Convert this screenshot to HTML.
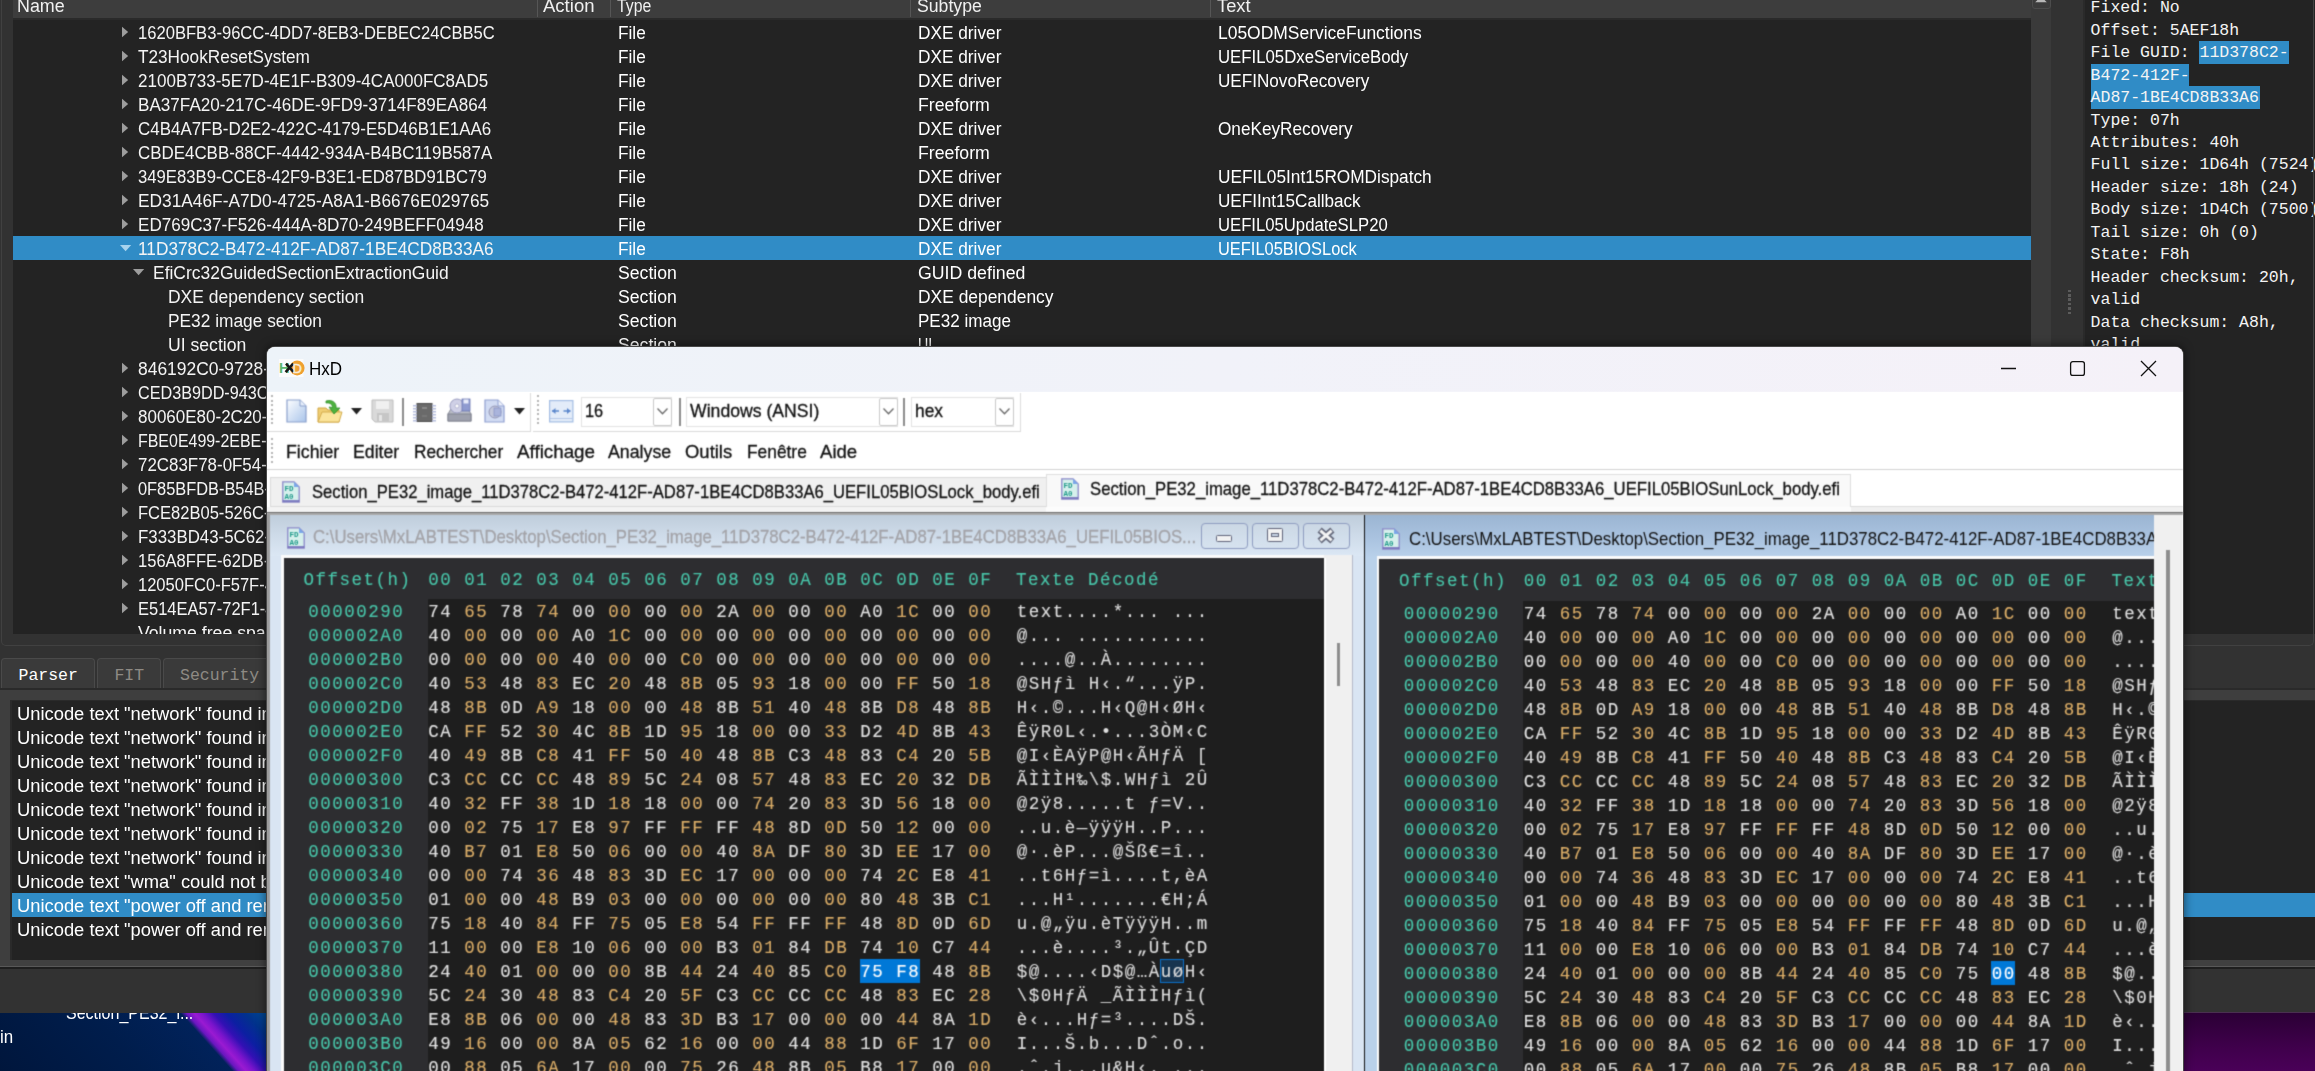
<!DOCTYPE html>
<html><head><meta charset="utf-8"><title>HxD</title><style>
html,body{margin:0;padding:0;background:#232323;}
body{width:2315px;height:1071px;overflow:hidden;position:relative;}
.t{position:absolute;white-space:pre;line-height:normal;margin:0;padding:0;transform-origin:0 0;}
.r{position:absolute;}
.c{position:absolute;overflow:hidden;}
svg{position:absolute;overflow:visible;}
</style></head><body>
<div class="r" style="left:0px;top:0px;width:2315px;height:1071px;background:#323232;"></div>
<div class="r" style="left:13px;top:0px;width:2018px;height:634px;background:#232323;"></div>
<div class="r" style="left:13px;top:0px;width:2018px;height:18px;background:#3d3d3d;"></div>
<div class="r" style="left:13px;top:18px;width:2018px;height:2px;background:#2a2a2a;"></div>
<div class="r" style="left:537px;top:0px;width:1px;height:17px;background:#565656;"></div>
<div class="r" style="left:610px;top:0px;width:1px;height:17px;background:#565656;"></div>
<div class="r" style="left:910px;top:0px;width:1px;height:17px;background:#565656;"></div>
<div class="r" style="left:1210px;top:0px;width:1px;height:17px;background:#565656;"></div>
<span class="t" style="left:16.50px;top:-4.09px;font:18px 'Liberation Sans',sans-serif;color:#f0f0f0;transform:scaleX(0.9934);"><span id="t1">Name</span></span>
<span class="t" style="left:543.00px;top:-4.09px;font:18px 'Liberation Sans',sans-serif;color:#f0f0f0;transform:scaleX(1.0294);"><span id="t2">Action</span></span>
<span class="t" style="left:617.30px;top:-4.09px;font:18px 'Liberation Sans',sans-serif;color:#f0f0f0;transform:scaleX(0.8788);"><span id="t3">Type</span></span>
<span class="t" style="left:917.00px;top:-4.09px;font:18px 'Liberation Sans',sans-serif;color:#f0f0f0;transform:scaleX(0.9809);"><span id="t4">Subtype</span></span>
<span class="t" style="left:1217.40px;top:-4.09px;font:18px 'Liberation Sans',sans-serif;color:#f0f0f0;transform:scaleX(1.0177);"><span id="t5">Text</span></span>
<div class="c" style="left:13px;top:20px;width:2018px;height:614px;">
<svg style="left:0;top:0" width="1" height="1"><path d="M109 6.7 L115.2 12 L109 17.3 Z" fill="#9d9d9d"/></svg>
<span class="t" style="left:125.00px;top:2.71px;font:18px 'Liberation Sans',sans-serif;color:#f4f4f4;transform:scaleX(0.9216);"><span id="t6">1620BFB3-96CC-4DD7-8EB3-DEBEC24CBB5C</span></span>
<span class="t" style="left:604.80px;top:2.71px;font:18px 'Liberation Sans',sans-serif;color:#fff;transform:scaleX(0.9581);"><span id="t7">File</span></span>
<span class="t" style="left:905.00px;top:2.71px;font:18px 'Liberation Sans',sans-serif;color:#fff;transform:scaleX(0.9583);"><span id="t8">DXE&nbsp;driver</span></span>
<span class="t" style="left:1204.50px;top:2.71px;font:18px 'Liberation Sans',sans-serif;color:#fff;transform:scaleX(0.9696);"><span id="t9">L05ODMServiceFunctions</span></span>
<svg style="left:0;top:0" width="1" height="1"><path d="M109 30.7 L115.2 36 L109 41.3 Z" fill="#9d9d9d"/></svg>
<span class="t" style="left:125.00px;top:26.71px;font:18px 'Liberation Sans',sans-serif;color:#f4f4f4;transform:scaleX(0.9546);"><span id="t10">T23HookResetSystem</span></span>
<span class="t" style="left:604.80px;top:26.71px;font:18px 'Liberation Sans',sans-serif;color:#fff;transform:scaleX(0.9581);"><span id="t11">File</span></span>
<span class="t" style="left:905.00px;top:26.71px;font:18px 'Liberation Sans',sans-serif;color:#fff;transform:scaleX(0.9583);"><span id="t12">DXE&nbsp;driver</span></span>
<span class="t" style="left:1204.50px;top:26.71px;font:18px 'Liberation Sans',sans-serif;color:#fff;transform:scaleX(0.9319);"><span id="t13">UEFIL05DxeServiceBody</span></span>
<svg style="left:0;top:0" width="1" height="1"><path d="M109 54.7 L115.2 60 L109 65.3 Z" fill="#9d9d9d"/></svg>
<span class="t" style="left:125.00px;top:50.71px;font:18px 'Liberation Sans',sans-serif;color:#f4f4f4;transform:scaleX(0.9459);"><span id="t14">2100B733-5E7D-4E1F-B309-4CA000FC8AD5</span></span>
<span class="t" style="left:604.80px;top:50.71px;font:18px 'Liberation Sans',sans-serif;color:#fff;transform:scaleX(0.9581);"><span id="t15">File</span></span>
<span class="t" style="left:905.00px;top:50.71px;font:18px 'Liberation Sans',sans-serif;color:#fff;transform:scaleX(0.9583);"><span id="t16">DXE&nbsp;driver</span></span>
<span class="t" style="left:1204.50px;top:50.71px;font:18px 'Liberation Sans',sans-serif;color:#fff;transform:scaleX(0.9507);"><span id="t17">UEFINovoRecovery</span></span>
<svg style="left:0;top:0" width="1" height="1"><path d="M109 78.7 L115.2 84 L109 89.3 Z" fill="#9d9d9d"/></svg>
<span class="t" style="left:125.00px;top:74.71px;font:18px 'Liberation Sans',sans-serif;color:#f4f4f4;transform:scaleX(0.9509);"><span id="t18">BA37FA20-217C-46DE-9FD9-3714F89EA864</span></span>
<span class="t" style="left:604.80px;top:74.71px;font:18px 'Liberation Sans',sans-serif;color:#fff;transform:scaleX(0.9581);"><span id="t19">File</span></span>
<span class="t" style="left:905.00px;top:74.71px;font:18px 'Liberation Sans',sans-serif;color:#fff;transform:scaleX(0.9834);"><span id="t20">Freeform</span></span>
<svg style="left:0;top:0" width="1" height="1"><path d="M109 102.7 L115.2 108 L109 113.3 Z" fill="#9d9d9d"/></svg>
<span class="t" style="left:125.00px;top:98.71px;font:18px 'Liberation Sans',sans-serif;color:#f4f4f4;transform:scaleX(0.9413);"><span id="t21">C4B4A7FB-D2E2-422C-4179-E5D46B1E1AA6</span></span>
<span class="t" style="left:604.80px;top:98.71px;font:18px 'Liberation Sans',sans-serif;color:#fff;transform:scaleX(0.9581);"><span id="t22">File</span></span>
<span class="t" style="left:905.00px;top:98.71px;font:18px 'Liberation Sans',sans-serif;color:#fff;transform:scaleX(0.9583);"><span id="t23">DXE&nbsp;driver</span></span>
<span class="t" style="left:1204.50px;top:98.71px;font:18px 'Liberation Sans',sans-serif;color:#fff;transform:scaleX(0.9548);"><span id="t24">OneKeyRecovery</span></span>
<svg style="left:0;top:0" width="1" height="1"><path d="M109 126.7 L115.2 132 L109 137.3 Z" fill="#9d9d9d"/></svg>
<span class="t" style="left:125.00px;top:122.71px;font:18px 'Liberation Sans',sans-serif;color:#f4f4f4;transform:scaleX(0.9398);"><span id="t25">CBDE4CBB-88CF-4442-934A-B4BC119B587A</span></span>
<span class="t" style="left:604.80px;top:122.71px;font:18px 'Liberation Sans',sans-serif;color:#fff;transform:scaleX(0.9581);"><span id="t26">File</span></span>
<span class="t" style="left:905.00px;top:122.71px;font:18px 'Liberation Sans',sans-serif;color:#fff;transform:scaleX(0.9834);"><span id="t27">Freeform</span></span>
<svg style="left:0;top:0" width="1" height="1"><path d="M109 150.7 L115.2 156 L109 161.3 Z" fill="#9d9d9d"/></svg>
<span class="t" style="left:125.00px;top:146.71px;font:18px 'Liberation Sans',sans-serif;color:#f4f4f4;transform:scaleX(0.9269);"><span id="t28">349E83B9-CCE8-42F9-B3E1-ED87BD91BC79</span></span>
<span class="t" style="left:604.80px;top:146.71px;font:18px 'Liberation Sans',sans-serif;color:#fff;transform:scaleX(0.9581);"><span id="t29">File</span></span>
<span class="t" style="left:905.00px;top:146.71px;font:18px 'Liberation Sans',sans-serif;color:#fff;transform:scaleX(0.9583);"><span id="t30">DXE&nbsp;driver</span></span>
<span class="t" style="left:1204.50px;top:146.71px;font:18px 'Liberation Sans',sans-serif;color:#fff;transform:scaleX(0.9579);"><span id="t31">UEFIL05Int15ROMDispatch</span></span>
<svg style="left:0;top:0" width="1" height="1"><path d="M109 174.7 L115.2 180 L109 185.3 Z" fill="#9d9d9d"/></svg>
<span class="t" style="left:125.00px;top:170.71px;font:18px 'Liberation Sans',sans-serif;color:#f4f4f4;transform:scaleX(0.9615);"><span id="t32">ED31A46F-A7D0-4725-A8A1-B6676E029765</span></span>
<span class="t" style="left:604.80px;top:170.71px;font:18px 'Liberation Sans',sans-serif;color:#fff;transform:scaleX(0.9581);"><span id="t33">File</span></span>
<span class="t" style="left:905.00px;top:170.71px;font:18px 'Liberation Sans',sans-serif;color:#fff;transform:scaleX(0.9583);"><span id="t34">DXE&nbsp;driver</span></span>
<span class="t" style="left:1204.50px;top:170.71px;font:18px 'Liberation Sans',sans-serif;color:#fff;transform:scaleX(0.9508);"><span id="t35">UEFIInt15Callback</span></span>
<svg style="left:0;top:0" width="1" height="1"><path d="M109 198.7 L115.2 204 L109 209.3 Z" fill="#9d9d9d"/></svg>
<span class="t" style="left:125.00px;top:194.71px;font:18px 'Liberation Sans',sans-serif;color:#f4f4f4;transform:scaleX(0.9492);"><span id="t36">ED769C37-F526-444A-8D70-249BEFF04948</span></span>
<span class="t" style="left:604.80px;top:194.71px;font:18px 'Liberation Sans',sans-serif;color:#fff;transform:scaleX(0.9581);"><span id="t37">File</span></span>
<span class="t" style="left:905.00px;top:194.71px;font:18px 'Liberation Sans',sans-serif;color:#fff;transform:scaleX(0.9583);"><span id="t38">DXE&nbsp;driver</span></span>
<span class="t" style="left:1204.50px;top:194.71px;font:18px 'Liberation Sans',sans-serif;color:#fff;transform:scaleX(0.9267);"><span id="t39">UEFIL05UpdateSLP20</span></span>
<div class="r" style="left:0px;top:216px;width:2018px;height:24px;background:#308cc6;"></div>
<svg style="left:0;top:0" width="1" height="1"><path d="M107 225 L118.2 225 L112.6 231.2 Z" fill="#a8d3ee"/></svg>
<span class="t" style="left:125.00px;top:218.71px;font:18px 'Liberation Sans',sans-serif;color:#f4f4f4;transform:scaleX(0.9590);"><span id="t40">11D378C2-B472-412F-AD87-1BE4CD8B33A6</span></span>
<span class="t" style="left:604.80px;top:218.71px;font:18px 'Liberation Sans',sans-serif;color:#fff;transform:scaleX(0.9581);"><span id="t41">File</span></span>
<span class="t" style="left:905.00px;top:218.71px;font:18px 'Liberation Sans',sans-serif;color:#fff;transform:scaleX(0.9583);"><span id="t42">DXE&nbsp;driver</span></span>
<span class="t" style="left:1204.50px;top:218.71px;font:18px 'Liberation Sans',sans-serif;color:#fff;transform:scaleX(0.9120);"><span id="t43">UEFIL05BIOSLock</span></span>
<svg style="left:0;top:0" width="1" height="1"><path d="M120 249 L131.2 249 L125.6 255.2 Z" fill="#9d9d9d"/></svg>
<span class="t" style="left:140.00px;top:242.71px;font:18px 'Liberation Sans',sans-serif;color:#f4f4f4;transform:scaleX(0.9690);"><span id="t44">EfiCrc32GuidedSectionExtractionGuid</span></span>
<span class="t" style="left:604.80px;top:242.71px;font:18px 'Liberation Sans',sans-serif;color:#fff;transform:scaleX(0.9809);"><span id="t45">Section</span></span>
<span class="t" style="left:905.00px;top:242.71px;font:18px 'Liberation Sans',sans-serif;color:#fff;transform:scaleX(0.9848);"><span id="t46">GUID&nbsp;defined</span></span>
<span class="t" style="left:155.40px;top:266.71px;font:18px 'Liberation Sans',sans-serif;color:#f4f4f4;transform:scaleX(0.9701);"><span id="t47">DXE&nbsp;dependency&nbsp;section</span></span>
<span class="t" style="left:604.80px;top:266.71px;font:18px 'Liberation Sans',sans-serif;color:#fff;transform:scaleX(0.9809);"><span id="t48">Section</span></span>
<span class="t" style="left:905.00px;top:266.71px;font:18px 'Liberation Sans',sans-serif;color:#fff;transform:scaleX(0.9671);"><span id="t49">DXE&nbsp;dependency</span></span>
<span class="t" style="left:155.40px;top:290.71px;font:18px 'Liberation Sans',sans-serif;color:#f4f4f4;transform:scaleX(0.9619);"><span id="t50">PE32&nbsp;image&nbsp;section</span></span>
<span class="t" style="left:604.80px;top:290.71px;font:18px 'Liberation Sans',sans-serif;color:#fff;transform:scaleX(0.9809);"><span id="t51">Section</span></span>
<span class="t" style="left:905.00px;top:290.71px;font:18px 'Liberation Sans',sans-serif;color:#fff;transform:scaleX(0.9474);"><span id="t52">PE32&nbsp;image</span></span>
<span class="t" style="left:155.40px;top:314.71px;font:18px 'Liberation Sans',sans-serif;color:#f4f4f4;transform:scaleX(0.9782);"><span id="t53">UI&nbsp;section</span></span>
<span class="t" style="left:604.80px;top:314.71px;font:18px 'Liberation Sans',sans-serif;color:#fff;transform:scaleX(0.9809);"><span id="t54">Section</span></span>
<span class="t" style="left:905.00px;top:314.71px;font:18px 'Liberation Sans',sans-serif;color:#fff;transform:scaleX(0.7889);"><span id="t55">UI</span></span>
<svg style="left:0;top:0" width="1" height="1"><path d="M109 342.7 L115.2 348 L109 353.3 Z" fill="#9d9d9d"/></svg>
<span class="t" style="left:125.00px;top:338.71px;font:18px 'Liberation Sans',sans-serif;color:#f4f4f4;transform:scaleX(0.9696);"><span id="t56">846192C0-9728</span>-4E2F</span>
<svg style="left:0;top:0" width="1" height="1"><path d="M109 366.7 L115.2 372 L109 377.3 Z" fill="#9d9d9d"/></svg>
<span class="t" style="left:125.00px;top:362.71px;font:18px 'Liberation Sans',sans-serif;color:#f4f4f4;transform:scaleX(0.8988);"><span id="t57">CED3B9DD-943</span>C-4A1B</span>
<svg style="left:0;top:0" width="1" height="1"><path d="M109 390.7 L115.2 396 L109 401.3 Z" fill="#9d9d9d"/></svg>
<span class="t" style="left:125.00px;top:386.71px;font:18px 'Liberation Sans',sans-serif;color:#f4f4f4;transform:scaleX(0.9442);"><span id="t58">80060E80-2C20</span>-4B3C</span>
<svg style="left:0;top:0" width="1" height="1"><path d="M109 414.7 L115.2 420 L109 425.3 Z" fill="#9d9d9d"/></svg>
<span class="t" style="left:125.00px;top:410.71px;font:18px 'Liberation Sans',sans-serif;color:#f4f4f4;transform:scaleX(0.8858);"><span id="t59">FBE0E499-2EBE</span>-4C4D</span>
<svg style="left:0;top:0" width="1" height="1"><path d="M109 438.7 L115.2 444 L109 449.3 Z" fill="#9d9d9d"/></svg>
<span class="t" style="left:125.00px;top:434.71px;font:18px 'Liberation Sans',sans-serif;color:#f4f4f4;transform:scaleX(0.9398);"><span id="t60">72C83F78-0F54</span>-4D5E</span>
<svg style="left:0;top:0" width="1" height="1"><path d="M109 462.7 L115.2 468 L109 473.3 Z" fill="#9d9d9d"/></svg>
<span class="t" style="left:125.00px;top:458.71px;font:18px 'Liberation Sans',sans-serif;color:#f4f4f4;transform:scaleX(0.9097);"><span id="t61">0F85BFDB-B54B</span>-4E6F</span>
<svg style="left:0;top:0" width="1" height="1"><path d="M109 486.7 L115.2 492 L109 497.3 Z" fill="#9d9d9d"/></svg>
<span class="t" style="left:125.00px;top:482.71px;font:18px 'Liberation Sans',sans-serif;color:#f4f4f4;transform:scaleX(0.9185);"><span id="t62">FCE82B05-526C</span>-4F7A</span>
<svg style="left:0;top:0" width="1" height="1"><path d="M109 510.7 L115.2 516 L109 521.3 Z" fill="#9d9d9d"/></svg>
<span class="t" style="left:125.00px;top:506.71px;font:18px 'Liberation Sans',sans-serif;color:#f4f4f4;transform:scaleX(0.9364);"><span id="t63">F333BD43-5C62</span>-4A8B</span>
<svg style="left:0;top:0" width="1" height="1"><path d="M109 534.7 L115.2 540 L109 545.3 Z" fill="#9d9d9d"/></svg>
<span class="t" style="left:125.00px;top:530.71px;font:18px 'Liberation Sans',sans-serif;color:#f4f4f4;transform:scaleX(0.9185);"><span id="t64">156A8FFE-62DB</span>-4B9C</span>
<svg style="left:0;top:0" width="1" height="1"><path d="M109 558.7 L115.2 564 L109 569.3 Z" fill="#9d9d9d"/></svg>
<span class="t" style="left:125.00px;top:554.71px;font:18px 'Liberation Sans',sans-serif;color:#f4f4f4;transform:scaleX(0.9176);"><span id="t65">12050FC0-F57F</span>-4C0D</span>
<svg style="left:0;top:0" width="1" height="1"><path d="M109 582.7 L115.2 588 L109 593.3 Z" fill="#9d9d9d"/></svg>
<span class="t" style="left:125.00px;top:578.71px;font:18px 'Liberation Sans',sans-serif;color:#f4f4f4;transform:scaleX(0.9151);"><span id="t66">E514EA57-72F1</span>-4D1E</span>
<span class="t" style="left:125.00px;top:602.71px;font:18px 'Liberation Sans',sans-serif;color:#f4f4f4;transform:scaleX(0.9810);"><span id="t67">Volume&nbsp;free&nbsp;sp</span>ace</span>
</div>
<div class="r" style="left:2031px;top:0px;width:20px;height:634px;background:#3a3a3a;"></div>
<div class="r" style="left:2031.5px;top:-6px;width:19.5px;height:15px;background:#3c3c3c;border:1.2px solid #4c4c4c;border-radius:3px;box-sizing:border-box;"></div>
<svg style="left:2034px;top:0px" width="14" height="8"><path d="M1.2 2.2 L7 -3.6 L12.8 2.2 Z" fill="#b8b8b8"/></svg>
<div class="r" style="left:2068px;top:289.5px;width:3.2px;height:2.8px;background:#5c5c5c;"></div>
<div class="r" style="left:2068px;top:293.9px;width:3.2px;height:2.8px;background:#5c5c5c;"></div>
<div class="r" style="left:2068px;top:298.3px;width:3.2px;height:2.8px;background:#5c5c5c;"></div>
<div class="r" style="left:2068px;top:302.7px;width:3.2px;height:2.8px;background:#5c5c5c;"></div>
<div class="r" style="left:2068px;top:307.1px;width:3.2px;height:2.8px;background:#5c5c5c;"></div>
<div class="r" style="left:2068px;top:311.5px;width:3.2px;height:2.8px;background:#5c5c5c;"></div>
<div class="r" style="left:2083px;top:0px;width:1.5px;height:634px;background:#2a2a2a;"></div>
<div class="r" style="left:2084.5px;top:0px;width:231px;height:634px;background:#232323;"></div>
<div class="r" style="left:2199.3px;top:40.8px;width:89.5px;height:23.2px;background:#308cc6;"></div>
<div class="r" style="left:2091px;top:64px;width:98px;height:22.4px;background:#308cc6;"></div>
<div class="r" style="left:2091px;top:86.2px;width:169px;height:22.7px;background:#308cc6;"></div>
<span class="t" style="left:2090.60px;top:-1.75px;font:16.5px 'Liberation Mono',monospace;color:#f4f4f4;"><span id="t68">Fixed:&nbsp;No</span></span>
<span class="t" style="left:2090.60px;top:20.70px;font:16.5px 'Liberation Mono',monospace;color:#f4f4f4;"><span id="t69">Offset:&nbsp;5AEF18h</span></span>
<span class="t" style="left:2090.60px;top:43.15px;font:16.5px 'Liberation Mono',monospace;color:#f4f4f4;"><span id="t70">File&nbsp;GUID:&nbsp;11D378C2-</span></span>
<span class="t" style="left:2090.60px;top:65.60px;font:16.5px 'Liberation Mono',monospace;color:#f4f4f4;"><span id="t71">B472-412F-</span></span>
<span class="t" style="left:2090.60px;top:88.05px;font:16.5px 'Liberation Mono',monospace;color:#f4f4f4;"><span id="t72">AD87-1BE4CD8B33A6</span></span>
<span class="t" style="left:2090.60px;top:110.50px;font:16.5px 'Liberation Mono',monospace;color:#f4f4f4;"><span id="t73">Type:&nbsp;07h</span></span>
<span class="t" style="left:2090.60px;top:132.95px;font:16.5px 'Liberation Mono',monospace;color:#f4f4f4;"><span id="t74">Attributes:&nbsp;40h</span></span>
<span class="t" style="left:2090.60px;top:155.40px;font:16.5px 'Liberation Mono',monospace;color:#f4f4f4;"><span id="t75">Full&nbsp;size:&nbsp;1D64h&nbsp;(7524)</span></span>
<span class="t" style="left:2090.60px;top:177.85px;font:16.5px 'Liberation Mono',monospace;color:#f4f4f4;"><span id="t76">Header&nbsp;size:&nbsp;18h&nbsp;(24)</span></span>
<span class="t" style="left:2090.60px;top:200.30px;font:16.5px 'Liberation Mono',monospace;color:#f4f4f4;"><span id="t77">Body&nbsp;size:&nbsp;1D4Ch&nbsp;(7500)</span></span>
<span class="t" style="left:2090.60px;top:222.75px;font:16.5px 'Liberation Mono',monospace;color:#f4f4f4;"><span id="t78">Tail&nbsp;size:&nbsp;0h&nbsp;(0)</span></span>
<span class="t" style="left:2090.60px;top:245.20px;font:16.5px 'Liberation Mono',monospace;color:#f4f4f4;"><span id="t79">State:&nbsp;F8h</span></span>
<span class="t" style="left:2090.60px;top:267.65px;font:16.5px 'Liberation Mono',monospace;color:#f4f4f4;"><span id="t80">Header&nbsp;checksum:&nbsp;20h,</span></span>
<span class="t" style="left:2090.60px;top:290.10px;font:16.5px 'Liberation Mono',monospace;color:#f4f4f4;"><span id="t81">valid</span></span>
<span class="t" style="left:2090.60px;top:312.55px;font:16.5px 'Liberation Mono',monospace;color:#f4f4f4;"><span id="t82">Data&nbsp;checksum:&nbsp;A8h,</span></span>
<span class="t" style="left:2090.60px;top:335.00px;font:16.5px 'Liberation Mono',monospace;color:#f4f4f4;"><span id="t83">valid</span></span>
<div class="r" style="left:0px;top:634px;width:2315px;height:12px;background:#323232;"></div>
<div class="r" style="left:1px;top:-10px;width:2313px;height:656px;background:transparent;border:1.3px solid #414141;border-top:none;border-radius:0 0 5px 5px;box-sizing:border-box;"></div>
<div class="r" style="left:1px;top:657.7px;width:94.3px;height:30.6px;background:#3a3a3a;border:1px solid #4a4a4a;border-bottom:none;box-sizing:border-box;border-radius:4px 4px 0 0;"></div>
<div class="r" style="left:96.8px;top:657.7px;width:64.4px;height:30.6px;background:#3a3a3a;border:1px solid #4a4a4a;border-bottom:none;box-sizing:border-box;border-radius:4px 4px 0 0;"></div>
<div class="r" style="left:162.7px;top:657.7px;width:112.3px;height:30.6px;background:#3a3a3a;border:1px solid #4a4a4a;border-bottom:none;box-sizing:border-box;border-radius:4px 4px 0 0;"></div>
<span class="t" style="left:18.50px;top:666.05px;font:16.5px 'Liberation Mono',monospace;color:#ffffff;"><span id="t84">Parser</span></span>
<span class="t" style="left:114.40px;top:666.05px;font:16.5px 'Liberation Mono',monospace;color:#8e8a84;"><span id="t85">FIT</span></span>
<span class="t" style="left:180.00px;top:666.05px;font:16.5px 'Liberation Mono',monospace;color:#8e8a84;"><span id="t86">Security</span></span>
<div class="r" style="left:0px;top:688.3px;width:2315px;height:1.8px;background:#2a2a2a;"></div>
<div class="r" style="left:0px;top:690px;width:2315px;height:10.5px;background:#3e3e3e;"></div>
<div class="r" style="left:0px;top:690px;width:10.3px;height:276px;background:#3e3e3e;"></div>
<div class="r" style="left:10.3px;top:699.5px;width:2305px;height:2px;background:#2a2a2a;"></div>
<div class="r" style="left:10.3px;top:699.5px;width:1.7px;height:262px;background:#2a2a2a;"></div>
<div class="r" style="left:12px;top:700.5px;width:2303px;height:259.5px;background:#232323;"></div>
<div class="r" style="left:12px;top:893.2px;width:2303px;height:24px;background:#308cc6;"></div>
<span class="t" style="left:17.00px;top:703.34px;font:18.3px 'Liberation Sans',sans-serif;color:#fff;transform:scaleX(1.0035);"><span id="t87">Unicode&nbsp;text&nbsp;"network"&nbsp;found&nbsp;i</span>n&nbsp;NVRAM</span>
<span class="t" style="left:17.00px;top:727.34px;font:18.3px 'Liberation Sans',sans-serif;color:#fff;transform:scaleX(1.0035);"><span id="t88">Unicode&nbsp;text&nbsp;"network"&nbsp;found&nbsp;i</span>n&nbsp;NVRAM</span>
<span class="t" style="left:17.00px;top:751.34px;font:18.3px 'Liberation Sans',sans-serif;color:#fff;transform:scaleX(1.0035);"><span id="t89">Unicode&nbsp;text&nbsp;"network"&nbsp;found&nbsp;i</span>n&nbsp;NVRAM</span>
<span class="t" style="left:17.00px;top:775.34px;font:18.3px 'Liberation Sans',sans-serif;color:#fff;transform:scaleX(1.0035);"><span id="t90">Unicode&nbsp;text&nbsp;"network"&nbsp;found&nbsp;i</span>n&nbsp;NVRAM</span>
<span class="t" style="left:17.00px;top:799.34px;font:18.3px 'Liberation Sans',sans-serif;color:#fff;transform:scaleX(1.0035);"><span id="t91">Unicode&nbsp;text&nbsp;"network"&nbsp;found&nbsp;i</span>n&nbsp;NVRAM</span>
<span class="t" style="left:17.00px;top:823.34px;font:18.3px 'Liberation Sans',sans-serif;color:#fff;transform:scaleX(1.0035);"><span id="t92">Unicode&nbsp;text&nbsp;"network"&nbsp;found&nbsp;i</span>n&nbsp;NVRAM</span>
<span class="t" style="left:17.00px;top:847.34px;font:18.3px 'Liberation Sans',sans-serif;color:#fff;transform:scaleX(1.0035);"><span id="t93">Unicode&nbsp;text&nbsp;"network"&nbsp;found&nbsp;i</span>n&nbsp;NVRAM</span>
<span class="t" style="left:17.00px;top:871.34px;font:18.3px 'Liberation Sans',sans-serif;color:#fff;transform:scaleX(1.0035);"><span id="t94">Unicode&nbsp;text&nbsp;"wma"&nbsp;could&nbsp;not&nbsp;be&nbsp;found</span></span>
<span class="t" style="left:17.00px;top:895.34px;font:18.3px 'Liberation Sans',sans-serif;color:#fff;transform:scaleX(1.0035);"><span id="t95">Unicode&nbsp;text&nbsp;"power&nbsp;off&nbsp;and&nbsp;removed</span></span>
<span class="t" style="left:17.00px;top:919.34px;font:18.3px 'Liberation Sans',sans-serif;color:#fff;transform:scaleX(1.0035);"><span id="t96">Unicode&nbsp;text&nbsp;"power&nbsp;off&nbsp;and&nbsp;removed</span></span>
<div class="r" style="left:0px;top:960px;width:2315px;height:6px;background:#404040;"></div>
<div class="r" style="left:0px;top:966px;width:2315px;height:1px;background:#585858;"></div>
<div class="r" style="left:0px;top:967px;width:2315px;height:2px;background:#1e1e1e;"></div>
<div class="r" style="left:0px;top:969px;width:2315px;height:43px;background:#323232;"></div>
<div class="c" style="left:0;top:1012.5px;width:268px;height:60px;background:linear-gradient(48deg,#00163c 0%,#001d4c 45%,#01225a 72.8%,#6a16c0 74.6%,#9a1ad2 77%,#7a14cc 79.5%,#3210b4 83%,#0c1fa2 87%,#01328c 93%,#014a92 100%);">
<span class="t" style="left:66.40px;top:-9.29px;font:18px 'Liberation Sans',sans-serif;color:#fff;transform:scaleX(0.8895);"><span id="t97">Section_PE32_i...</span></span>
<span class="t" style="left:0.00px;top:14.71px;font:18px 'Liberation Sans',sans-serif;color:#fff;transform:scaleX(0.9418);"><span id="t98">in</span></span>
</div>
<div class="r" style="left:2183px;top:1012.5px;width:132px;height:59px;background:#3a0046;background:linear-gradient(180deg,#2b0035 0%,#40004c 60%,#4a0058 100%);"></div>
<div class="r" style="left:2183px;top:1012px;width:132px;height:1px;background:#4a3050;"></div>
<div class="r" style="left:266px;top:346px;width:1918px;height:740px;background:#474747;border-radius:9px 9px 0 0;box-shadow:0 0 10px rgba(0,0,0,.55);"></div>
<div class="c" style="left:267px;top:347px;width:1916px;height:724px;background:#fff;border-radius:8px 8px 0 0;">
<div class="r" style="left:0px;top:0px;width:1916px;height:45px;background:#eef2f9;background:linear-gradient(90deg,#edf3f9 0%,#f1f2f9 50%,#f5f1f8 100%);"></div>
<svg style="left:11.9px;top:12px" width="24.4" height="18" viewBox="0 0 24.4 18"><rect x="0" y="0" width="24.4" height="18" fill="#fbfbfb"/><circle cx="18.2" cy="9" r="7.4" fill="#efa030"/><text x="0" y="14" font-family="Liberation Sans" font-weight="bold" font-size="14.5" fill="#5cb870">H</text><path d="M7 4.6 L14.5 12.8 M14.2 4.6 L6.6 13.2" stroke="#161616" stroke-width="2.5"/><text x="13.6" y="13.6" font-family="Liberation Sans" font-size="13" fill="#f6eadb" stroke="#f6eadb" stroke-width=".5">D</text></svg>
<span class="t" style="left:41.50px;top:10.89px;font:18.8px 'Liberation Sans',sans-serif;color:#000;transform:scaleX(0.9061);"><span id="t99">HxD</span></span>
<svg style="left:1733px;top:13px" width="170" height="20" viewBox="0 0 170 20" fill="none" stroke="#111" stroke-width="1.3"><path d="M1 8.5 H16"/><rect x="70.6" y="1.6" width="13.8" height="13.8" rx="2.2"/><path d="M141 1 L156 16 M156 1 L141 16"/></svg>
<svg width="0" height="0" style="left:0;top:0"><filter id="hxblur" x="0" y="0" width="100%" height="100%" color-interpolation-filters="sRGB"><feConvolveMatrix order="3" kernelMatrix="1 4 1 4 16 4 1 4 1" divisor="36" edgeMode="duplicate" preserveAlpha="false"/></filter></svg>
<div style="position:absolute;left:0;top:0;width:1916px;height:724px;filter:url(#hxblur);">
<div class="r" style="left:0px;top:45px;width:1916px;height:77px;background:#fff;"></div>
<div class="r" style="left:0px;top:84px;width:264px;height:1px;background:#d9d9d9;"></div>
<div class="r" style="left:263px;top:46px;width:1px;height:39px;background:#dcdcdc;"></div>
<div class="r" style="left:266px;top:84px;width:487px;height:1px;background:#d9d9d9;"></div>
<div class="r" style="left:752.5px;top:46px;width:1px;height:39px;background:#dcdcdc;"></div>
<div class="r" style="left:3.5px;top:48px;width:2px;height:2px;background:#b4b4b4;"></div>
<div class="r" style="left:3.5px;top:52.5px;width:2px;height:2px;background:#b4b4b4;"></div>
<div class="r" style="left:3.5px;top:57px;width:2px;height:2px;background:#b4b4b4;"></div>
<div class="r" style="left:3.5px;top:61.5px;width:2px;height:2px;background:#b4b4b4;"></div>
<div class="r" style="left:3.5px;top:66px;width:2px;height:2px;background:#b4b4b4;"></div>
<div class="r" style="left:3.5px;top:70.5px;width:2px;height:2px;background:#b4b4b4;"></div>
<div class="r" style="left:3.5px;top:75px;width:2px;height:2px;background:#b4b4b4;"></div>
<div class="r" style="left:269.5px;top:48px;width:2px;height:2px;background:#b4b4b4;"></div>
<div class="r" style="left:269.5px;top:52.5px;width:2px;height:2px;background:#b4b4b4;"></div>
<div class="r" style="left:269.5px;top:57px;width:2px;height:2px;background:#b4b4b4;"></div>
<div class="r" style="left:269.5px;top:61.5px;width:2px;height:2px;background:#b4b4b4;"></div>
<div class="r" style="left:269.5px;top:66px;width:2px;height:2px;background:#b4b4b4;"></div>
<div class="r" style="left:269.5px;top:70.5px;width:2px;height:2px;background:#b4b4b4;"></div>
<div class="r" style="left:269.5px;top:75px;width:2px;height:2px;background:#b4b4b4;"></div>
<div class="r" style="left:3.5px;top:91px;width:2px;height:2px;background:#b4b4b4;"></div>
<div class="r" style="left:3.5px;top:95.5px;width:2px;height:2px;background:#b4b4b4;"></div>
<div class="r" style="left:3.5px;top:100px;width:2px;height:2px;background:#b4b4b4;"></div>
<div class="r" style="left:3.5px;top:104.5px;width:2px;height:2px;background:#b4b4b4;"></div>
<div class="r" style="left:3.5px;top:109px;width:2px;height:2px;background:#b4b4b4;"></div>
<div class="r" style="left:3.5px;top:113.5px;width:2px;height:2px;background:#b4b4b4;"></div>
<svg style="left:19px;top:52px" width="21" height="24" viewBox="0 0 21 24"><defs><linearGradient id="gdoc" x1="0" y1="0" x2="1" y2="1"><stop offset="0" stop-color="#fdfeff"/><stop offset="1" stop-color="#a9c4ea"/></linearGradient></defs><path d="M1 1 H14 L20 7 V23 H1 Z" fill="url(#gdoc)" stroke="#8aa0cc" stroke-width="1.2"/><path d="M14 1 V7 H20" fill="#e8f0fb" stroke="#8aa0cc" stroke-width="1"/></svg>
<svg style="left:50px;top:51px" width="26" height="26" viewBox="0 0 26 26"><path d="M1 10 H9 L11 12 H22 V24 H1 Z" fill="#f0cf74" stroke="#cfa440" stroke-width="1"/><path d="M1 24 L5 14 H25 L22 24 Z" fill="#fbe59c" stroke="#d4ac4c" stroke-width="1"/><path d="M9 3 C15 1 20 5 19 10 L23 10 L17 16 L12 9 L15.5 9.5 C15.5 6.5 13 4.5 9 5 Z" fill="#4db23e" stroke="#2f8a27" stroke-width=".8"/></svg>
<svg style="left:84px;top:61px" width="11" height="7" viewBox="0 0 11 7"><path d="M0 0 H11 L5.5 6.5 Z" fill="#222"/></svg>
<svg style="left:103.5px;top:52px" width="23" height="24" viewBox="0 0 23 24"><path d="M1 1 H22 V23 H4 L1 20 Z" fill="#d9d9d9" stroke="#bdbdbd" stroke-width="1"/><rect x="5" y="2" width="13" height="8" fill="#f0f0f0"/><rect x="6" y="14" width="12" height="9" fill="#c6c6c6"/><rect x="8" y="16" width="3" height="6" fill="#e6e6e6"/></svg>
<div class="r" style="left:135px;top:51px;width:1.6px;height:28px;background:#8c8c8c;"></div>
<svg style="left:146px;top:56px" width="23" height="19" viewBox="0 0 23 19"><rect x="4" y="0.5" width="15" height="18" fill="#6a6a6a" stroke="#4e4e4e"/><rect x="9" y="4" width="5" height="2" fill="#8a8a8a"/><rect x="9" y="12" width="5" height="2" fill="#777"/><rect x="0" y="2" width="4" height="1.5" fill="#b4bcdc"/><rect x="19" y="2" width="4" height="1.5" fill="#b4bcdc"/><rect x="0" y="5" width="4" height="1.5" fill="#b4bcdc"/><rect x="19" y="5" width="4" height="1.5" fill="#b4bcdc"/><rect x="0" y="8" width="4" height="1.5" fill="#b4bcdc"/><rect x="19" y="8" width="4" height="1.5" fill="#b4bcdc"/><rect x="0" y="11" width="4" height="1.5" fill="#b4bcdc"/><rect x="19" y="11" width="4" height="1.5" fill="#b4bcdc"/><rect x="0" y="14" width="4" height="1.5" fill="#b4bcdc"/><rect x="19" y="14" width="4" height="1.5" fill="#b4bcdc"/><rect x="0" y="17" width="4" height="1.5" fill="#b4bcdc"/><rect x="19" y="17" width="4" height="1.5" fill="#b4bcdc"/></svg>
<svg style="left:180px;top:51px" width="25" height="26" viewBox="0 0 25 26"><path d="M1 16 L5 9 H20 L24 16 V23 H1 Z" fill="#b9bcc6" stroke="#8d909c" stroke-width="1"/><rect x="1" y="16" width="23" height="7" fill="#9da0ad" stroke="#80838f"/><circle cx="10" cy="8" r="7" fill="#cfd0e6" stroke="#9a9cc0"/><circle cx="10" cy="8" r="2" fill="#fff" stroke="#9a9cc0" stroke-width=".6"/><rect x="15" y="1" width="8" height="12" fill="#8f9bd0" stroke="#6a76b0" stroke-width=".8"/><rect x="16.5" y="1.5" width="5" height="4" fill="#e8ecfa"/></svg>
<svg style="left:217px;top:52px" width="21" height="24" viewBox="0 0 21 24"><path d="M1 1 H14 L20 7 V23 H1 Z" fill="#d2dcf3" stroke="#8f9fd0" stroke-width="1.2"/><path d="M14 1 V7 H20" fill="#eef2fb" stroke="#8f9fd0"/><circle cx="11" cy="13" r="6" fill="#c4c8dc" stroke="#9498b8"/><rect x="10" y="9" width="7" height="8" fill="#aab4dc" stroke="#8590c0" stroke-width=".7"/></svg>
<svg style="left:247px;top:61px" width="11" height="7" viewBox="0 0 11 7"><path d="M0 0 H11 L5.5 6.5 Z" fill="#222"/></svg>
<svg style="left:282px;top:52.5px" width="24.5" height="22.5" viewBox="0 0 24.5 22.5"><rect x=".6" y=".6" width="23.3" height="21.3" fill="#e3ecf9" stroke="#a3bde3" stroke-width="1.2"/><path d="M3 11 H10 M14.5 11 H21.5" stroke="#5a86cc" stroke-width="1.6"/><path d="M3 11 L6.5 8 V14 Z M21.5 11 L18 8 V14 Z" fill="#5a86cc"/><path d="M1 18.5 H23.5" stroke="#b4c8e8" stroke-width="1"/></svg>
<div class="r" style="left:314px;top:50px;width:91px;height:30px;background:#fff;border:1px solid #e2e2e2;box-sizing:border-box;"></div>
<div class="r" style="left:386px;top:51px;width:18.5px;height:28px;background:#fff;border:1px solid #c9c9c9;box-sizing:border-box;border-radius:2px;"></div>
<svg style="left:389.5px;top:61px" width="11" height="7" viewBox="0 0 11 7"><path d="M0.5 0.5 L5.5 5.8 L10.5 0.5" fill="none" stroke="#6a6a6a" stroke-width="1.3"/></svg>
<span class="t" style="left:318.20px;top:53.26px;font:18.5px 'Liberation Sans',sans-serif;color:#111;transform:scaleX(0.8844);-webkit-text-stroke:0.3px;"><span id="t100">16</span></span>
<div class="r" style="left:412px;top:51px;width:1.6px;height:28px;background:#8c8c8c;"></div>
<div class="r" style="left:419px;top:50px;width:212px;height:30px;background:#fff;border:1px solid #e2e2e2;box-sizing:border-box;"></div>
<div class="r" style="left:612px;top:51px;width:18.5px;height:28px;background:#fff;border:1px solid #c9c9c9;box-sizing:border-box;border-radius:2px;"></div>
<svg style="left:615.5px;top:61px" width="11" height="7" viewBox="0 0 11 7"><path d="M0.5 0.5 L5.5 5.8 L10.5 0.5" fill="none" stroke="#6a6a6a" stroke-width="1.3"/></svg>
<span class="t" style="left:422.60px;top:53.26px;font:18.5px 'Liberation Sans',sans-serif;color:#111;transform:scaleX(0.9536);-webkit-text-stroke:0.3px;"><span id="t101">Windows&nbsp;(ANSI)</span></span>
<div class="r" style="left:636.4px;top:51px;width:1.6px;height:28px;background:#8c8c8c;"></div>
<div class="r" style="left:644px;top:50px;width:103px;height:30px;background:#fff;border:1px solid #e2e2e2;box-sizing:border-box;"></div>
<div class="r" style="left:728px;top:51px;width:18.5px;height:28px;background:#fff;border:1px solid #c9c9c9;box-sizing:border-box;border-radius:2px;"></div>
<svg style="left:731.5px;top:61px" width="11" height="7" viewBox="0 0 11 7"><path d="M0.5 0.5 L5.5 5.8 L10.5 0.5" fill="none" stroke="#6a6a6a" stroke-width="1.3"/></svg>
<span class="t" style="left:647.80px;top:53.26px;font:18.5px 'Liberation Sans',sans-serif;color:#111;transform:scaleX(0.9387);-webkit-text-stroke:0.3px;"><span id="t102">hex</span></span>
<span class="t" style="left:19.20px;top:93.86px;font:18.5px 'Liberation Sans',sans-serif;color:#111;transform:scaleX(0.9583);-webkit-text-stroke:0.3px;"><span id="t103">Fichier</span></span>
<span class="t" style="left:86.20px;top:93.86px;font:18.5px 'Liberation Sans',sans-serif;color:#111;transform:scaleX(0.9560);-webkit-text-stroke:0.3px;"><span id="t104">Editer</span></span>
<span class="t" style="left:146.60px;top:93.86px;font:18.5px 'Liberation Sans',sans-serif;color:#111;transform:scaleX(0.9327);-webkit-text-stroke:0.3px;"><span id="t105">Rechercher</span></span>
<span class="t" style="left:249.80px;top:93.86px;font:18.5px 'Liberation Sans',sans-serif;color:#111;transform:scaleX(1.0155);-webkit-text-stroke:0.3px;"><span id="t106">Affichage</span></span>
<span class="t" style="left:341.20px;top:93.86px;font:18.5px 'Liberation Sans',sans-serif;color:#111;transform:scaleX(0.9601);-webkit-text-stroke:0.3px;"><span id="t107">Analyse</span></span>
<span class="t" style="left:418.20px;top:93.86px;font:18.5px 'Liberation Sans',sans-serif;color:#111;transform:scaleX(0.9980);-webkit-text-stroke:0.3px;"><span id="t108">Outils</span></span>
<span class="t" style="left:479.60px;top:93.86px;font:18.5px 'Liberation Sans',sans-serif;color:#111;transform:scaleX(0.9378);-webkit-text-stroke:0.3px;"><span id="t109">Fenêtre</span></span>
<span class="t" style="left:553.20px;top:93.86px;font:18.5px 'Liberation Sans',sans-serif;color:#111;transform:scaleX(1.0046);-webkit-text-stroke:0.3px;"><span id="t110">Aide</span></span>
<div class="r" style="left:0px;top:121.5px;width:1916px;height:1.2px;background:#d2d2d2;"></div>
<div class="r" style="left:0px;top:123px;width:1916px;height:42px;background:#fff;"></div>
<div class="r" style="left:1584px;top:159px;width:332px;height:1px;background:#dcdcdc;"></div>
<div class="r" style="left:1584px;top:160px;width:332px;height:5px;background:#f0f0f0;"></div>
<div class="r" style="left:3px;top:129.5px;width:777px;height:30px;background:#f0f0f0;border:1px solid #dadada;box-sizing:border-box;"></div>
<div class="r" style="left:0px;top:160px;width:780px;height:5px;background:#f3f3f3;"></div>
<div class="r" style="left:779.4px;top:126.5px;width:804.6px;height:33.5px;background:#f9f9f9;border:1px solid #dedede;border-bottom:none;box-sizing:border-box;"></div>
<div class="r" style="left:779.4px;top:159.5px;width:804.6px;height:5.5px;background:#fcfcfc;"></div>
<svg style="left:15px;top:133.5px" width="18" height="22" viewBox="0 0 18 22"><path d="M.8 .8 H12 L17.2 6 V21.2 H.8 Z" fill="#d6f0ec" stroke="#8a86c8" stroke-width="1.3"/><path d="M12 .8 V6 H17.2 Z" fill="#7aa7e8"/><path d="M.8 20 H17.2" stroke="#6f69b8" stroke-width="1.6"/><text x="2.6" y="10" font-family="Liberation Mono" font-weight="bold" font-size="7.5" fill="#1f9a8a">FD</text><text x="2.6" y="17.5" font-family="Liberation Mono" font-weight="bold" font-size="7.5" fill="#1f9a8a">A0</text></svg>
<svg style="left:793.6px;top:130.5px" width="18" height="22" viewBox="0 0 18 22"><path d="M.8 .8 H12 L17.2 6 V21.2 H.8 Z" fill="#d6f0ec" stroke="#8a86c8" stroke-width="1.3"/><path d="M12 .8 V6 H17.2 Z" fill="#7aa7e8"/><path d="M.8 20 H17.2" stroke="#6f69b8" stroke-width="1.6"/><text x="2.6" y="10" font-family="Liberation Mono" font-weight="bold" font-size="7.5" fill="#1f9a8a">FD</text><text x="2.6" y="17.5" font-family="Liberation Mono" font-weight="bold" font-size="7.5" fill="#1f9a8a">A0</text></svg>
<span class="t" style="left:44.60px;top:134.26px;font:18.5px 'Liberation Sans',sans-serif;color:#111;transform:scaleX(0.8988);-webkit-text-stroke:0.3px;"><span id="t111">Section_PE32_image_11D378C2-B472-412F-AD87-1BE4CD8B33A6_UEFIL05BIOSLock_body.efi</span></span>
<span class="t" style="left:823.20px;top:131.26px;font:18.5px 'Liberation Sans',sans-serif;color:#111;transform:scaleX(0.9032);-webkit-text-stroke:0.3px;"><span id="t112">Section_PE32_image_11D378C2-B472-412F-AD87-1BE4CD8B33A6_UEFIL05BIOSunLock_body.efi</span></span>
<div class="r" style="left:0px;top:165px;width:1916px;height:1px;background:#6d6d6d;"></div>
<div class="r" style="left:0px;top:166px;width:1916px;height:1.5px;background:#a9a9a9;"></div>
<div class="r" style="left:0px;top:167.5px;width:1916px;height:600px;background:#abb8c8;"></div>
<div class="r" style="left:0px;top:167px;width:3px;height:600px;background:#9c9c9c;"></div>
<div class="r" style="left:3px;top:167.5px;width:1094px;height:600px;background:#d9e5f3;"></div>
<div class="r" style="left:3px;top:167.5px;width:1094px;height:41px;background:#d9e5f3;background:linear-gradient(180deg,#bfcddb 0%,#cedbe9 50%,#dbe7f4 100%);"></div>
<svg style="left:20px;top:179.5px" width="18" height="22" viewBox="0 0 18 22"><path d="M.8 .8 H12 L17.2 6 V21.2 H.8 Z" fill="#d6f0ec" stroke="#8a86c8" stroke-width="1.3"/><path d="M12 .8 V6 H17.2 Z" fill="#7aa7e8"/><path d="M.8 20 H17.2" stroke="#6f69b8" stroke-width="1.6"/><text x="2.6" y="10" font-family="Liberation Mono" font-weight="bold" font-size="7.5" fill="#1f9a8a">FD</text><text x="2.6" y="17.5" font-family="Liberation Mono" font-weight="bold" font-size="7.5" fill="#1f9a8a">A0</text></svg>
<span class="t" style="left:46.20px;top:179.26px;font:18.5px 'Liberation Sans',sans-serif;color:#a3a3a8;transform:scaleX(0.9062);-webkit-text-stroke:0.3px;"><span id="t113">C:\Users\MxLABTEST\Desktop\Section_PE32_image_11D378C2-B472-412F-AD87-1BE4CD8B33A</span>6_UEFIL05BIOS...</span>
<div class="r" style="left:933.6px;top:175.5px;width:47px;height:26.5px;background:transparent;border:1.4px solid #8e9cc0;box-sizing:border-box;border-radius:4px;background:linear-gradient(180deg,rgba(255,255,255,.10),rgba(255,255,255,0));"></div>
<div class="r" style="left:948.8px;top:187.5px;width:16.5px;height:7.5px;background:#f2f2f2;border:1.5px solid #60647a;box-sizing:border-box;border-radius:1.5px;"></div>
<div class="r" style="left:984.6px;top:175.5px;width:47px;height:26.5px;background:transparent;border:1.4px solid #8e9cc0;box-sizing:border-box;border-radius:4px;background:linear-gradient(180deg,rgba(255,255,255,.10),rgba(255,255,255,0));"></div>
<div class="r" style="left:999.8px;top:181.3px;width:16.5px;height:13.7px;background:#f2f2f2;border:1.5px solid #60647a;box-sizing:border-box;border-radius:1.5px;"></div>
<div class="r" style="left:1004.3px;top:186px;width:7.6px;height:4.4px;background:#c9d6e6;border:1.3px solid #60647a;box-sizing:border-box;"></div>
<div class="r" style="left:1035.6px;top:175.5px;width:47px;height:26.5px;background:transparent;border:1.4px solid #8e9cc0;box-sizing:border-box;border-radius:4px;background:linear-gradient(180deg,rgba(255,255,255,.10),rgba(255,255,255,0));"></div>
<svg style="left:1050.1px;top:180.5px" width="18" height="15" viewBox="0 0 18 15"><path d="M2.6 2 L15.4 13 M15.4 2 L2.6 13" stroke="#666a7c" stroke-width="6.4" /><path d="M3.4 2.7 L14.6 12.3 M14.6 2.7 L3.4 12.3" stroke="#f4f4f4" stroke-width="3"/></svg>
<div class="r" style="left:1097px;top:167.5px;width:1.3px;height:600px;background:#111;"></div>
<div class="r" style="left:1098.2px;top:167.5px;width:800px;height:600px;background:#b9d1ea;"></div>
<div class="r" style="left:1098.2px;top:167.5px;width:800px;height:43px;background:#a9c3e3;background:linear-gradient(180deg,#9bb5d2 0%,#aac3e0 55%,#b9d1ea 100%);"></div>
<svg style="left:1115px;top:180.5px" width="18" height="22" viewBox="0 0 18 22"><path d="M.8 .8 H12 L17.2 6 V21.2 H.8 Z" fill="#d6f0ec" stroke="#8a86c8" stroke-width="1.3"/><path d="M12 .8 V6 H17.2 Z" fill="#7aa7e8"/><path d="M.8 20 H17.2" stroke="#6f69b8" stroke-width="1.6"/><text x="2.6" y="10" font-family="Liberation Mono" font-weight="bold" font-size="7.5" fill="#1f9a8a">FD</text><text x="2.6" y="17.5" font-family="Liberation Mono" font-weight="bold" font-size="7.5" fill="#1f9a8a">A0</text></svg>
<div class="c" style="left:1133px;top:167px;width:754px;height:44px;">
<span class="t" style="left:8.70px;top:14.26px;font:18.5px 'Liberation Sans',sans-serif;color:#111;transform:scaleX(0.9110);"><span id="t114">C:\Users\MxLABTEST\Desktop\Section_PE32_image_11D378C2-B472-412F-AD87-1BE4CD8B33A</span>6_UEFIL05BIOSunLock_body.efi</span>
</div>
<div class="r" style="left:14.3px;top:207.6px;width:1043.1px;height:600px;background:#fbfbfb;"></div>
<div class="c" style="left:16.5px;top:210.5px;width:1040.9px;height:518.5px;background:#1e1e1e;">
<div class="r" style="left:0px;top:0px;width:1100px;height:41.8px;background:#2d2d30;"></div>
<div class="r" style="left:0px;top:41.8px;width:144.2px;height:600px;background:#2d2d30;"></div>
<span class="t" style="left:20.05px;top:12.52px;font:17.5px 'Liberation Mono',monospace;letter-spacing:1.500px;color:#48c6aa;-webkit-text-stroke:0.12px;">Offset(h)</span>
<span class="t" style="left:144.75px;top:12.52px;font:17.5px 'Liberation Mono',monospace;letter-spacing:1.500px;color:#48c6aa;-webkit-text-stroke:0.12px;">00&nbsp;01&nbsp;02&nbsp;03&nbsp;04&nbsp;05&nbsp;06&nbsp;07&nbsp;08&nbsp;09&nbsp;0A&nbsp;0B&nbsp;0C&nbsp;0D&nbsp;0E&nbsp;0F</span>
<span class="t" style="left:732.45px;top:12.52px;font:17.5px 'Liberation Mono',monospace;letter-spacing:1.500px;color:#48c6aa;-webkit-text-stroke:0.12px;">Texte&nbsp;Décodé</span>
<span class="t" style="left:24.75px;top:44.72px;font:17.5px 'Liberation Mono',monospace;letter-spacing:1.500px;color:#48c6aa;-webkit-text-stroke:0.12px;">00000290</span>
<span class="t" style="left:144.75px;top:44.72px;font:17.5px 'Liberation Mono',monospace;letter-spacing:1.500px;color:#e2e2e2;-webkit-text-stroke:0.12px;">74&nbsp;&nbsp;&nbsp;&nbsp;78&nbsp;&nbsp;&nbsp;&nbsp;00&nbsp;&nbsp;&nbsp;&nbsp;00&nbsp;&nbsp;&nbsp;&nbsp;2A&nbsp;&nbsp;&nbsp;&nbsp;00&nbsp;&nbsp;&nbsp;&nbsp;A0&nbsp;&nbsp;&nbsp;&nbsp;00&nbsp;&nbsp;&nbsp;</span>
<span class="t" style="left:144.75px;top:44.72px;font:17.5px 'Liberation Mono',monospace;letter-spacing:1.500px;color:#dcae68;-webkit-text-stroke:0.12px;">&nbsp;&nbsp;&nbsp;65&nbsp;&nbsp;&nbsp;&nbsp;74&nbsp;&nbsp;&nbsp;&nbsp;00&nbsp;&nbsp;&nbsp;&nbsp;00&nbsp;&nbsp;&nbsp;&nbsp;00&nbsp;&nbsp;&nbsp;&nbsp;00&nbsp;&nbsp;&nbsp;&nbsp;1C&nbsp;&nbsp;&nbsp;&nbsp;00</span>
<span class="t" style="left:733.25px;top:44.72px;font:17.5px 'Liberation Mono',monospace;letter-spacing:1.500px;color:#dedede;-webkit-text-stroke:0.12px;">text....*...&nbsp;...</span>
<span class="t" style="left:24.75px;top:68.72px;font:17.5px 'Liberation Mono',monospace;letter-spacing:1.500px;color:#48c6aa;-webkit-text-stroke:0.12px;">000002A0</span>
<span class="t" style="left:144.75px;top:68.72px;font:17.5px 'Liberation Mono',monospace;letter-spacing:1.500px;color:#e2e2e2;-webkit-text-stroke:0.12px;">40&nbsp;&nbsp;&nbsp;&nbsp;00&nbsp;&nbsp;&nbsp;&nbsp;A0&nbsp;&nbsp;&nbsp;&nbsp;00&nbsp;&nbsp;&nbsp;&nbsp;00&nbsp;&nbsp;&nbsp;&nbsp;00&nbsp;&nbsp;&nbsp;&nbsp;00&nbsp;&nbsp;&nbsp;&nbsp;00&nbsp;&nbsp;&nbsp;</span>
<span class="t" style="left:144.75px;top:68.72px;font:17.5px 'Liberation Mono',monospace;letter-spacing:1.500px;color:#dcae68;-webkit-text-stroke:0.12px;">&nbsp;&nbsp;&nbsp;00&nbsp;&nbsp;&nbsp;&nbsp;00&nbsp;&nbsp;&nbsp;&nbsp;1C&nbsp;&nbsp;&nbsp;&nbsp;00&nbsp;&nbsp;&nbsp;&nbsp;00&nbsp;&nbsp;&nbsp;&nbsp;00&nbsp;&nbsp;&nbsp;&nbsp;00&nbsp;&nbsp;&nbsp;&nbsp;00</span>
<span class="t" style="left:733.25px;top:68.72px;font:17.5px 'Liberation Mono',monospace;letter-spacing:1.500px;color:#dedede;-webkit-text-stroke:0.12px;">@...&nbsp;...........</span>
<span class="t" style="left:24.75px;top:92.72px;font:17.5px 'Liberation Mono',monospace;letter-spacing:1.500px;color:#48c6aa;-webkit-text-stroke:0.12px;">000002B0</span>
<span class="t" style="left:144.75px;top:92.72px;font:17.5px 'Liberation Mono',monospace;letter-spacing:1.500px;color:#e2e2e2;-webkit-text-stroke:0.12px;">00&nbsp;&nbsp;&nbsp;&nbsp;00&nbsp;&nbsp;&nbsp;&nbsp;40&nbsp;&nbsp;&nbsp;&nbsp;00&nbsp;&nbsp;&nbsp;&nbsp;00&nbsp;&nbsp;&nbsp;&nbsp;00&nbsp;&nbsp;&nbsp;&nbsp;00&nbsp;&nbsp;&nbsp;&nbsp;00&nbsp;&nbsp;&nbsp;</span>
<span class="t" style="left:144.75px;top:92.72px;font:17.5px 'Liberation Mono',monospace;letter-spacing:1.500px;color:#dcae68;-webkit-text-stroke:0.12px;">&nbsp;&nbsp;&nbsp;00&nbsp;&nbsp;&nbsp;&nbsp;00&nbsp;&nbsp;&nbsp;&nbsp;00&nbsp;&nbsp;&nbsp;&nbsp;C0&nbsp;&nbsp;&nbsp;&nbsp;00&nbsp;&nbsp;&nbsp;&nbsp;00&nbsp;&nbsp;&nbsp;&nbsp;00&nbsp;&nbsp;&nbsp;&nbsp;00</span>
<span class="t" style="left:733.25px;top:92.72px;font:17.5px 'Liberation Mono',monospace;letter-spacing:1.500px;color:#dedede;-webkit-text-stroke:0.12px;">....@..À........</span>
<span class="t" style="left:24.75px;top:116.72px;font:17.5px 'Liberation Mono',monospace;letter-spacing:1.500px;color:#48c6aa;-webkit-text-stroke:0.12px;">000002C0</span>
<span class="t" style="left:144.75px;top:116.72px;font:17.5px 'Liberation Mono',monospace;letter-spacing:1.500px;color:#e2e2e2;-webkit-text-stroke:0.12px;">40&nbsp;&nbsp;&nbsp;&nbsp;48&nbsp;&nbsp;&nbsp;&nbsp;EC&nbsp;&nbsp;&nbsp;&nbsp;48&nbsp;&nbsp;&nbsp;&nbsp;05&nbsp;&nbsp;&nbsp;&nbsp;18&nbsp;&nbsp;&nbsp;&nbsp;00&nbsp;&nbsp;&nbsp;&nbsp;50&nbsp;&nbsp;&nbsp;</span>
<span class="t" style="left:144.75px;top:116.72px;font:17.5px 'Liberation Mono',monospace;letter-spacing:1.500px;color:#dcae68;-webkit-text-stroke:0.12px;">&nbsp;&nbsp;&nbsp;53&nbsp;&nbsp;&nbsp;&nbsp;83&nbsp;&nbsp;&nbsp;&nbsp;20&nbsp;&nbsp;&nbsp;&nbsp;8B&nbsp;&nbsp;&nbsp;&nbsp;93&nbsp;&nbsp;&nbsp;&nbsp;00&nbsp;&nbsp;&nbsp;&nbsp;FF&nbsp;&nbsp;&nbsp;&nbsp;18</span>
<span class="t" style="left:733.25px;top:116.72px;font:17.5px 'Liberation Mono',monospace;letter-spacing:1.500px;color:#dedede;-webkit-text-stroke:0.12px;">@SHƒì&nbsp;H‹.“...ÿP.</span>
<span class="t" style="left:24.75px;top:140.72px;font:17.5px 'Liberation Mono',monospace;letter-spacing:1.500px;color:#48c6aa;-webkit-text-stroke:0.12px;">000002D0</span>
<span class="t" style="left:144.75px;top:140.72px;font:17.5px 'Liberation Mono',monospace;letter-spacing:1.500px;color:#e2e2e2;-webkit-text-stroke:0.12px;">48&nbsp;&nbsp;&nbsp;&nbsp;0D&nbsp;&nbsp;&nbsp;&nbsp;18&nbsp;&nbsp;&nbsp;&nbsp;00&nbsp;&nbsp;&nbsp;&nbsp;8B&nbsp;&nbsp;&nbsp;&nbsp;40&nbsp;&nbsp;&nbsp;&nbsp;8B&nbsp;&nbsp;&nbsp;&nbsp;48&nbsp;&nbsp;&nbsp;</span>
<span class="t" style="left:144.75px;top:140.72px;font:17.5px 'Liberation Mono',monospace;letter-spacing:1.500px;color:#dcae68;-webkit-text-stroke:0.12px;">&nbsp;&nbsp;&nbsp;8B&nbsp;&nbsp;&nbsp;&nbsp;A9&nbsp;&nbsp;&nbsp;&nbsp;00&nbsp;&nbsp;&nbsp;&nbsp;48&nbsp;&nbsp;&nbsp;&nbsp;51&nbsp;&nbsp;&nbsp;&nbsp;48&nbsp;&nbsp;&nbsp;&nbsp;D8&nbsp;&nbsp;&nbsp;&nbsp;8B</span>
<span class="t" style="left:733.25px;top:140.72px;font:17.5px 'Liberation Mono',monospace;letter-spacing:1.500px;color:#dedede;-webkit-text-stroke:0.12px;">H‹.©...H‹Q@H‹ØH‹</span>
<span class="t" style="left:24.75px;top:164.72px;font:17.5px 'Liberation Mono',monospace;letter-spacing:1.500px;color:#48c6aa;-webkit-text-stroke:0.12px;">000002E0</span>
<span class="t" style="left:144.75px;top:164.72px;font:17.5px 'Liberation Mono',monospace;letter-spacing:1.500px;color:#e2e2e2;-webkit-text-stroke:0.12px;">CA&nbsp;&nbsp;&nbsp;&nbsp;52&nbsp;&nbsp;&nbsp;&nbsp;4C&nbsp;&nbsp;&nbsp;&nbsp;1D&nbsp;&nbsp;&nbsp;&nbsp;18&nbsp;&nbsp;&nbsp;&nbsp;00&nbsp;&nbsp;&nbsp;&nbsp;D2&nbsp;&nbsp;&nbsp;&nbsp;8B&nbsp;&nbsp;&nbsp;</span>
<span class="t" style="left:144.75px;top:164.72px;font:17.5px 'Liberation Mono',monospace;letter-spacing:1.500px;color:#dcae68;-webkit-text-stroke:0.12px;">&nbsp;&nbsp;&nbsp;FF&nbsp;&nbsp;&nbsp;&nbsp;30&nbsp;&nbsp;&nbsp;&nbsp;8B&nbsp;&nbsp;&nbsp;&nbsp;95&nbsp;&nbsp;&nbsp;&nbsp;00&nbsp;&nbsp;&nbsp;&nbsp;33&nbsp;&nbsp;&nbsp;&nbsp;4D&nbsp;&nbsp;&nbsp;&nbsp;43</span>
<span class="t" style="left:733.25px;top:164.72px;font:17.5px 'Liberation Mono',monospace;letter-spacing:1.500px;color:#dedede;-webkit-text-stroke:0.12px;">ÊÿR0L‹.•...3ÒM‹C</span>
<span class="t" style="left:24.75px;top:188.72px;font:17.5px 'Liberation Mono',monospace;letter-spacing:1.500px;color:#48c6aa;-webkit-text-stroke:0.12px;">000002F0</span>
<span class="t" style="left:144.75px;top:188.72px;font:17.5px 'Liberation Mono',monospace;letter-spacing:1.500px;color:#e2e2e2;-webkit-text-stroke:0.12px;">40&nbsp;&nbsp;&nbsp;&nbsp;8B&nbsp;&nbsp;&nbsp;&nbsp;41&nbsp;&nbsp;&nbsp;&nbsp;50&nbsp;&nbsp;&nbsp;&nbsp;48&nbsp;&nbsp;&nbsp;&nbsp;C3&nbsp;&nbsp;&nbsp;&nbsp;83&nbsp;&nbsp;&nbsp;&nbsp;20&nbsp;&nbsp;&nbsp;</span>
<span class="t" style="left:144.75px;top:188.72px;font:17.5px 'Liberation Mono',monospace;letter-spacing:1.500px;color:#dcae68;-webkit-text-stroke:0.12px;">&nbsp;&nbsp;&nbsp;49&nbsp;&nbsp;&nbsp;&nbsp;C8&nbsp;&nbsp;&nbsp;&nbsp;FF&nbsp;&nbsp;&nbsp;&nbsp;40&nbsp;&nbsp;&nbsp;&nbsp;8B&nbsp;&nbsp;&nbsp;&nbsp;48&nbsp;&nbsp;&nbsp;&nbsp;C4&nbsp;&nbsp;&nbsp;&nbsp;5B</span>
<span class="t" style="left:733.25px;top:188.72px;font:17.5px 'Liberation Mono',monospace;letter-spacing:1.500px;color:#dedede;-webkit-text-stroke:0.12px;">@I‹ÈAÿP@H‹ÃHƒÄ&nbsp;[</span>
<span class="t" style="left:24.75px;top:212.72px;font:17.5px 'Liberation Mono',monospace;letter-spacing:1.500px;color:#48c6aa;-webkit-text-stroke:0.12px;">00000300</span>
<span class="t" style="left:144.75px;top:212.72px;font:17.5px 'Liberation Mono',monospace;letter-spacing:1.500px;color:#e2e2e2;-webkit-text-stroke:0.12px;">C3&nbsp;&nbsp;&nbsp;&nbsp;CC&nbsp;&nbsp;&nbsp;&nbsp;48&nbsp;&nbsp;&nbsp;&nbsp;5C&nbsp;&nbsp;&nbsp;&nbsp;08&nbsp;&nbsp;&nbsp;&nbsp;48&nbsp;&nbsp;&nbsp;&nbsp;EC&nbsp;&nbsp;&nbsp;&nbsp;32&nbsp;&nbsp;&nbsp;</span>
<span class="t" style="left:144.75px;top:212.72px;font:17.5px 'Liberation Mono',monospace;letter-spacing:1.500px;color:#dcae68;-webkit-text-stroke:0.12px;">&nbsp;&nbsp;&nbsp;CC&nbsp;&nbsp;&nbsp;&nbsp;CC&nbsp;&nbsp;&nbsp;&nbsp;89&nbsp;&nbsp;&nbsp;&nbsp;24&nbsp;&nbsp;&nbsp;&nbsp;57&nbsp;&nbsp;&nbsp;&nbsp;83&nbsp;&nbsp;&nbsp;&nbsp;20&nbsp;&nbsp;&nbsp;&nbsp;DB</span>
<span class="t" style="left:733.25px;top:212.72px;font:17.5px 'Liberation Mono',monospace;letter-spacing:1.500px;color:#dedede;-webkit-text-stroke:0.12px;">ÃÌÌÌH‰\$.WHƒì&nbsp;2Û</span>
<span class="t" style="left:24.75px;top:236.72px;font:17.5px 'Liberation Mono',monospace;letter-spacing:1.500px;color:#48c6aa;-webkit-text-stroke:0.12px;">00000310</span>
<span class="t" style="left:144.75px;top:236.72px;font:17.5px 'Liberation Mono',monospace;letter-spacing:1.500px;color:#e2e2e2;-webkit-text-stroke:0.12px;">40&nbsp;&nbsp;&nbsp;&nbsp;FF&nbsp;&nbsp;&nbsp;&nbsp;1D&nbsp;&nbsp;&nbsp;&nbsp;18&nbsp;&nbsp;&nbsp;&nbsp;00&nbsp;&nbsp;&nbsp;&nbsp;20&nbsp;&nbsp;&nbsp;&nbsp;3D&nbsp;&nbsp;&nbsp;&nbsp;18&nbsp;&nbsp;&nbsp;</span>
<span class="t" style="left:144.75px;top:236.72px;font:17.5px 'Liberation Mono',monospace;letter-spacing:1.500px;color:#dcae68;-webkit-text-stroke:0.12px;">&nbsp;&nbsp;&nbsp;32&nbsp;&nbsp;&nbsp;&nbsp;38&nbsp;&nbsp;&nbsp;&nbsp;18&nbsp;&nbsp;&nbsp;&nbsp;00&nbsp;&nbsp;&nbsp;&nbsp;74&nbsp;&nbsp;&nbsp;&nbsp;83&nbsp;&nbsp;&nbsp;&nbsp;56&nbsp;&nbsp;&nbsp;&nbsp;00</span>
<span class="t" style="left:733.25px;top:236.72px;font:17.5px 'Liberation Mono',monospace;letter-spacing:1.500px;color:#dedede;-webkit-text-stroke:0.12px;">@2ÿ8.....t&nbsp;ƒ=V..</span>
<span class="t" style="left:24.75px;top:260.72px;font:17.5px 'Liberation Mono',monospace;letter-spacing:1.500px;color:#48c6aa;-webkit-text-stroke:0.12px;">00000320</span>
<span class="t" style="left:144.75px;top:260.72px;font:17.5px 'Liberation Mono',monospace;letter-spacing:1.500px;color:#e2e2e2;-webkit-text-stroke:0.12px;">00&nbsp;&nbsp;&nbsp;&nbsp;75&nbsp;&nbsp;&nbsp;&nbsp;E8&nbsp;&nbsp;&nbsp;&nbsp;FF&nbsp;&nbsp;&nbsp;&nbsp;FF&nbsp;&nbsp;&nbsp;&nbsp;8D&nbsp;&nbsp;&nbsp;&nbsp;50&nbsp;&nbsp;&nbsp;&nbsp;00&nbsp;&nbsp;&nbsp;</span>
<span class="t" style="left:144.75px;top:260.72px;font:17.5px 'Liberation Mono',monospace;letter-spacing:1.500px;color:#dcae68;-webkit-text-stroke:0.12px;">&nbsp;&nbsp;&nbsp;02&nbsp;&nbsp;&nbsp;&nbsp;17&nbsp;&nbsp;&nbsp;&nbsp;97&nbsp;&nbsp;&nbsp;&nbsp;FF&nbsp;&nbsp;&nbsp;&nbsp;48&nbsp;&nbsp;&nbsp;&nbsp;0D&nbsp;&nbsp;&nbsp;&nbsp;12&nbsp;&nbsp;&nbsp;&nbsp;00</span>
<span class="t" style="left:733.25px;top:260.72px;font:17.5px 'Liberation Mono',monospace;letter-spacing:1.500px;color:#dedede;-webkit-text-stroke:0.12px;">..u.è—ÿÿÿH..P...</span>
<span class="t" style="left:24.75px;top:284.72px;font:17.5px 'Liberation Mono',monospace;letter-spacing:1.500px;color:#48c6aa;-webkit-text-stroke:0.12px;">00000330</span>
<span class="t" style="left:144.75px;top:284.72px;font:17.5px 'Liberation Mono',monospace;letter-spacing:1.500px;color:#e2e2e2;-webkit-text-stroke:0.12px;">40&nbsp;&nbsp;&nbsp;&nbsp;01&nbsp;&nbsp;&nbsp;&nbsp;50&nbsp;&nbsp;&nbsp;&nbsp;00&nbsp;&nbsp;&nbsp;&nbsp;40&nbsp;&nbsp;&nbsp;&nbsp;DF&nbsp;&nbsp;&nbsp;&nbsp;3D&nbsp;&nbsp;&nbsp;&nbsp;17&nbsp;&nbsp;&nbsp;</span>
<span class="t" style="left:144.75px;top:284.72px;font:17.5px 'Liberation Mono',monospace;letter-spacing:1.500px;color:#dcae68;-webkit-text-stroke:0.12px;">&nbsp;&nbsp;&nbsp;B7&nbsp;&nbsp;&nbsp;&nbsp;E8&nbsp;&nbsp;&nbsp;&nbsp;06&nbsp;&nbsp;&nbsp;&nbsp;00&nbsp;&nbsp;&nbsp;&nbsp;8A&nbsp;&nbsp;&nbsp;&nbsp;80&nbsp;&nbsp;&nbsp;&nbsp;EE&nbsp;&nbsp;&nbsp;&nbsp;00</span>
<span class="t" style="left:733.25px;top:284.72px;font:17.5px 'Liberation Mono',monospace;letter-spacing:1.500px;color:#dedede;-webkit-text-stroke:0.12px;">@·.èP...@Šß€=î..</span>
<span class="t" style="left:24.75px;top:308.72px;font:17.5px 'Liberation Mono',monospace;letter-spacing:1.500px;color:#48c6aa;-webkit-text-stroke:0.12px;">00000340</span>
<span class="t" style="left:144.75px;top:308.72px;font:17.5px 'Liberation Mono',monospace;letter-spacing:1.500px;color:#e2e2e2;-webkit-text-stroke:0.12px;">00&nbsp;&nbsp;&nbsp;&nbsp;74&nbsp;&nbsp;&nbsp;&nbsp;48&nbsp;&nbsp;&nbsp;&nbsp;3D&nbsp;&nbsp;&nbsp;&nbsp;17&nbsp;&nbsp;&nbsp;&nbsp;00&nbsp;&nbsp;&nbsp;&nbsp;74&nbsp;&nbsp;&nbsp;&nbsp;E8&nbsp;&nbsp;&nbsp;</span>
<span class="t" style="left:144.75px;top:308.72px;font:17.5px 'Liberation Mono',monospace;letter-spacing:1.500px;color:#dcae68;-webkit-text-stroke:0.12px;">&nbsp;&nbsp;&nbsp;00&nbsp;&nbsp;&nbsp;&nbsp;36&nbsp;&nbsp;&nbsp;&nbsp;83&nbsp;&nbsp;&nbsp;&nbsp;EC&nbsp;&nbsp;&nbsp;&nbsp;00&nbsp;&nbsp;&nbsp;&nbsp;00&nbsp;&nbsp;&nbsp;&nbsp;2C&nbsp;&nbsp;&nbsp;&nbsp;41</span>
<span class="t" style="left:733.25px;top:308.72px;font:17.5px 'Liberation Mono',monospace;letter-spacing:1.500px;color:#dedede;-webkit-text-stroke:0.12px;">..t6Hƒ=ì....t,èA</span>
<span class="t" style="left:24.75px;top:332.72px;font:17.5px 'Liberation Mono',monospace;letter-spacing:1.500px;color:#48c6aa;-webkit-text-stroke:0.12px;">00000350</span>
<span class="t" style="left:144.75px;top:332.72px;font:17.5px 'Liberation Mono',monospace;letter-spacing:1.500px;color:#e2e2e2;-webkit-text-stroke:0.12px;">01&nbsp;&nbsp;&nbsp;&nbsp;00&nbsp;&nbsp;&nbsp;&nbsp;B9&nbsp;&nbsp;&nbsp;&nbsp;00&nbsp;&nbsp;&nbsp;&nbsp;00&nbsp;&nbsp;&nbsp;&nbsp;00&nbsp;&nbsp;&nbsp;&nbsp;80&nbsp;&nbsp;&nbsp;&nbsp;3B&nbsp;&nbsp;&nbsp;</span>
<span class="t" style="left:144.75px;top:332.72px;font:17.5px 'Liberation Mono',monospace;letter-spacing:1.500px;color:#dcae68;-webkit-text-stroke:0.12px;">&nbsp;&nbsp;&nbsp;00&nbsp;&nbsp;&nbsp;&nbsp;48&nbsp;&nbsp;&nbsp;&nbsp;03&nbsp;&nbsp;&nbsp;&nbsp;00&nbsp;&nbsp;&nbsp;&nbsp;00&nbsp;&nbsp;&nbsp;&nbsp;00&nbsp;&nbsp;&nbsp;&nbsp;48&nbsp;&nbsp;&nbsp;&nbsp;C1</span>
<span class="t" style="left:733.25px;top:332.72px;font:17.5px 'Liberation Mono',monospace;letter-spacing:1.500px;color:#dedede;-webkit-text-stroke:0.12px;">...H¹.......€H;Á</span>
<span class="t" style="left:24.75px;top:356.72px;font:17.5px 'Liberation Mono',monospace;letter-spacing:1.500px;color:#48c6aa;-webkit-text-stroke:0.12px;">00000360</span>
<span class="t" style="left:144.75px;top:356.72px;font:17.5px 'Liberation Mono',monospace;letter-spacing:1.500px;color:#e2e2e2;-webkit-text-stroke:0.12px;">75&nbsp;&nbsp;&nbsp;&nbsp;40&nbsp;&nbsp;&nbsp;&nbsp;FF&nbsp;&nbsp;&nbsp;&nbsp;05&nbsp;&nbsp;&nbsp;&nbsp;54&nbsp;&nbsp;&nbsp;&nbsp;FF&nbsp;&nbsp;&nbsp;&nbsp;48&nbsp;&nbsp;&nbsp;&nbsp;0D&nbsp;&nbsp;&nbsp;</span>
<span class="t" style="left:144.75px;top:356.72px;font:17.5px 'Liberation Mono',monospace;letter-spacing:1.500px;color:#dcae68;-webkit-text-stroke:0.12px;">&nbsp;&nbsp;&nbsp;18&nbsp;&nbsp;&nbsp;&nbsp;84&nbsp;&nbsp;&nbsp;&nbsp;75&nbsp;&nbsp;&nbsp;&nbsp;E8&nbsp;&nbsp;&nbsp;&nbsp;FF&nbsp;&nbsp;&nbsp;&nbsp;FF&nbsp;&nbsp;&nbsp;&nbsp;8D&nbsp;&nbsp;&nbsp;&nbsp;6D</span>
<span class="t" style="left:733.25px;top:356.72px;font:17.5px 'Liberation Mono',monospace;letter-spacing:1.500px;color:#dedede;-webkit-text-stroke:0.12px;">u.@„ÿu.èTÿÿÿH..m</span>
<span class="t" style="left:24.75px;top:380.72px;font:17.5px 'Liberation Mono',monospace;letter-spacing:1.500px;color:#48c6aa;-webkit-text-stroke:0.12px;">00000370</span>
<span class="t" style="left:144.75px;top:380.72px;font:17.5px 'Liberation Mono',monospace;letter-spacing:1.500px;color:#e2e2e2;-webkit-text-stroke:0.12px;">11&nbsp;&nbsp;&nbsp;&nbsp;00&nbsp;&nbsp;&nbsp;&nbsp;10&nbsp;&nbsp;&nbsp;&nbsp;00&nbsp;&nbsp;&nbsp;&nbsp;B3&nbsp;&nbsp;&nbsp;&nbsp;84&nbsp;&nbsp;&nbsp;&nbsp;74&nbsp;&nbsp;&nbsp;&nbsp;C7&nbsp;&nbsp;&nbsp;</span>
<span class="t" style="left:144.75px;top:380.72px;font:17.5px 'Liberation Mono',monospace;letter-spacing:1.500px;color:#dcae68;-webkit-text-stroke:0.12px;">&nbsp;&nbsp;&nbsp;00&nbsp;&nbsp;&nbsp;&nbsp;E8&nbsp;&nbsp;&nbsp;&nbsp;06&nbsp;&nbsp;&nbsp;&nbsp;00&nbsp;&nbsp;&nbsp;&nbsp;01&nbsp;&nbsp;&nbsp;&nbsp;DB&nbsp;&nbsp;&nbsp;&nbsp;10&nbsp;&nbsp;&nbsp;&nbsp;44</span>
<span class="t" style="left:733.25px;top:380.72px;font:17.5px 'Liberation Mono',monospace;letter-spacing:1.500px;color:#dedede;-webkit-text-stroke:0.12px;">...è....³.„Ût.ÇD</span>
<div class="r" style="left:576px;top:401.8px;width:60px;height:24px;background:#0078d7;"></div>
<div class="r" style="left:876.5px;top:401.8px;width:24px;height:24px;background:#17344f;border:1px solid #0a6fc8;box-sizing:border-box;"></div>
<span class="t" style="left:24.75px;top:404.72px;font:17.5px 'Liberation Mono',monospace;letter-spacing:1.500px;color:#48c6aa;-webkit-text-stroke:0.12px;">00000380</span>
<span class="t" style="left:144.75px;top:404.72px;font:17.5px 'Liberation Mono',monospace;letter-spacing:1.500px;color:#e2e2e2;-webkit-text-stroke:0.12px;">24&nbsp;&nbsp;&nbsp;&nbsp;01&nbsp;&nbsp;&nbsp;&nbsp;00&nbsp;&nbsp;&nbsp;&nbsp;8B&nbsp;&nbsp;&nbsp;&nbsp;24&nbsp;&nbsp;&nbsp;&nbsp;85&nbsp;&nbsp;&nbsp;&nbsp;&nbsp;&nbsp;&nbsp;&nbsp;&nbsp;&nbsp;48&nbsp;&nbsp;&nbsp;</span>
<span class="t" style="left:144.75px;top:404.72px;font:17.5px 'Liberation Mono',monospace;letter-spacing:1.500px;color:#dcae68;-webkit-text-stroke:0.12px;">&nbsp;&nbsp;&nbsp;40&nbsp;&nbsp;&nbsp;&nbsp;00&nbsp;&nbsp;&nbsp;&nbsp;00&nbsp;&nbsp;&nbsp;&nbsp;44&nbsp;&nbsp;&nbsp;&nbsp;40&nbsp;&nbsp;&nbsp;&nbsp;C0&nbsp;&nbsp;&nbsp;&nbsp;&nbsp;&nbsp;&nbsp;&nbsp;&nbsp;&nbsp;8B</span>
<span class="t" style="left:144.75px;top:404.72px;font:17.5px 'Liberation Mono',monospace;letter-spacing:1.500px;color:#fff;-webkit-text-stroke:0.12px;">&nbsp;&nbsp;&nbsp;&nbsp;&nbsp;&nbsp;&nbsp;&nbsp;&nbsp;&nbsp;&nbsp;&nbsp;&nbsp;&nbsp;&nbsp;&nbsp;&nbsp;&nbsp;&nbsp;&nbsp;&nbsp;&nbsp;&nbsp;&nbsp;&nbsp;&nbsp;&nbsp;&nbsp;&nbsp;&nbsp;&nbsp;&nbsp;&nbsp;&nbsp;&nbsp;&nbsp;75&nbsp;F8&nbsp;&nbsp;&nbsp;&nbsp;&nbsp;&nbsp;</span>
<span class="t" style="left:733.25px;top:404.72px;font:17.5px 'Liberation Mono',monospace;letter-spacing:1.500px;color:#dedede;-webkit-text-stroke:0.12px;">$@....‹D$@…ÀuøH‹</span>
<span class="t" style="left:24.75px;top:428.72px;font:17.5px 'Liberation Mono',monospace;letter-spacing:1.500px;color:#48c6aa;-webkit-text-stroke:0.12px;">00000390</span>
<span class="t" style="left:144.75px;top:428.72px;font:17.5px 'Liberation Mono',monospace;letter-spacing:1.500px;color:#e2e2e2;-webkit-text-stroke:0.12px;">5C&nbsp;&nbsp;&nbsp;&nbsp;30&nbsp;&nbsp;&nbsp;&nbsp;83&nbsp;&nbsp;&nbsp;&nbsp;20&nbsp;&nbsp;&nbsp;&nbsp;C3&nbsp;&nbsp;&nbsp;&nbsp;CC&nbsp;&nbsp;&nbsp;&nbsp;48&nbsp;&nbsp;&nbsp;&nbsp;EC&nbsp;&nbsp;&nbsp;</span>
<span class="t" style="left:144.75px;top:428.72px;font:17.5px 'Liberation Mono',monospace;letter-spacing:1.500px;color:#dcae68;-webkit-text-stroke:0.12px;">&nbsp;&nbsp;&nbsp;24&nbsp;&nbsp;&nbsp;&nbsp;48&nbsp;&nbsp;&nbsp;&nbsp;C4&nbsp;&nbsp;&nbsp;&nbsp;5F&nbsp;&nbsp;&nbsp;&nbsp;CC&nbsp;&nbsp;&nbsp;&nbsp;CC&nbsp;&nbsp;&nbsp;&nbsp;83&nbsp;&nbsp;&nbsp;&nbsp;28</span>
<span class="t" style="left:733.25px;top:428.72px;font:17.5px 'Liberation Mono',monospace;letter-spacing:1.500px;color:#dedede;-webkit-text-stroke:0.12px;">\$0HƒÄ&nbsp;_ÃÌÌÌHƒì(</span>
<span class="t" style="left:24.75px;top:452.72px;font:17.5px 'Liberation Mono',monospace;letter-spacing:1.500px;color:#48c6aa;-webkit-text-stroke:0.12px;">000003A0</span>
<span class="t" style="left:144.75px;top:452.72px;font:17.5px 'Liberation Mono',monospace;letter-spacing:1.500px;color:#e2e2e2;-webkit-text-stroke:0.12px;">E8&nbsp;&nbsp;&nbsp;&nbsp;06&nbsp;&nbsp;&nbsp;&nbsp;00&nbsp;&nbsp;&nbsp;&nbsp;83&nbsp;&nbsp;&nbsp;&nbsp;B3&nbsp;&nbsp;&nbsp;&nbsp;00&nbsp;&nbsp;&nbsp;&nbsp;00&nbsp;&nbsp;&nbsp;&nbsp;8A&nbsp;&nbsp;&nbsp;</span>
<span class="t" style="left:144.75px;top:452.72px;font:17.5px 'Liberation Mono',monospace;letter-spacing:1.500px;color:#dcae68;-webkit-text-stroke:0.12px;">&nbsp;&nbsp;&nbsp;8B&nbsp;&nbsp;&nbsp;&nbsp;00&nbsp;&nbsp;&nbsp;&nbsp;48&nbsp;&nbsp;&nbsp;&nbsp;3D&nbsp;&nbsp;&nbsp;&nbsp;17&nbsp;&nbsp;&nbsp;&nbsp;00&nbsp;&nbsp;&nbsp;&nbsp;44&nbsp;&nbsp;&nbsp;&nbsp;1D</span>
<span class="t" style="left:733.25px;top:452.72px;font:17.5px 'Liberation Mono',monospace;letter-spacing:1.500px;color:#dedede;-webkit-text-stroke:0.12px;">è‹...Hƒ=³....DŠ.</span>
<span class="t" style="left:24.75px;top:476.72px;font:17.5px 'Liberation Mono',monospace;letter-spacing:1.500px;color:#48c6aa;-webkit-text-stroke:0.12px;">000003B0</span>
<span class="t" style="left:144.75px;top:476.72px;font:17.5px 'Liberation Mono',monospace;letter-spacing:1.500px;color:#e2e2e2;-webkit-text-stroke:0.12px;">49&nbsp;&nbsp;&nbsp;&nbsp;00&nbsp;&nbsp;&nbsp;&nbsp;8A&nbsp;&nbsp;&nbsp;&nbsp;62&nbsp;&nbsp;&nbsp;&nbsp;00&nbsp;&nbsp;&nbsp;&nbsp;44&nbsp;&nbsp;&nbsp;&nbsp;1D&nbsp;&nbsp;&nbsp;&nbsp;17&nbsp;&nbsp;&nbsp;</span>
<span class="t" style="left:144.75px;top:476.72px;font:17.5px 'Liberation Mono',monospace;letter-spacing:1.500px;color:#dcae68;-webkit-text-stroke:0.12px;">&nbsp;&nbsp;&nbsp;16&nbsp;&nbsp;&nbsp;&nbsp;00&nbsp;&nbsp;&nbsp;&nbsp;05&nbsp;&nbsp;&nbsp;&nbsp;16&nbsp;&nbsp;&nbsp;&nbsp;00&nbsp;&nbsp;&nbsp;&nbsp;88&nbsp;&nbsp;&nbsp;&nbsp;6F&nbsp;&nbsp;&nbsp;&nbsp;00</span>
<span class="t" style="left:733.25px;top:476.72px;font:17.5px 'Liberation Mono',monospace;letter-spacing:1.500px;color:#dedede;-webkit-text-stroke:0.12px;">I...Š.b...Dˆ.o..</span>
<span class="t" style="left:24.75px;top:500.72px;font:17.5px 'Liberation Mono',monospace;letter-spacing:1.500px;color:#48c6aa;-webkit-text-stroke:0.12px;">000003C0</span>
<span class="t" style="left:144.75px;top:500.72px;font:17.5px 'Liberation Mono',monospace;letter-spacing:1.500px;color:#e2e2e2;-webkit-text-stroke:0.12px;">00&nbsp;&nbsp;&nbsp;&nbsp;05&nbsp;&nbsp;&nbsp;&nbsp;17&nbsp;&nbsp;&nbsp;&nbsp;00&nbsp;&nbsp;&nbsp;&nbsp;26&nbsp;&nbsp;&nbsp;&nbsp;8B&nbsp;&nbsp;&nbsp;&nbsp;B8&nbsp;&nbsp;&nbsp;&nbsp;00&nbsp;&nbsp;&nbsp;</span>
<span class="t" style="left:144.75px;top:500.72px;font:17.5px 'Liberation Mono',monospace;letter-spacing:1.500px;color:#dcae68;-webkit-text-stroke:0.12px;">&nbsp;&nbsp;&nbsp;88&nbsp;&nbsp;&nbsp;&nbsp;6A&nbsp;&nbsp;&nbsp;&nbsp;00&nbsp;&nbsp;&nbsp;&nbsp;75&nbsp;&nbsp;&nbsp;&nbsp;48&nbsp;&nbsp;&nbsp;&nbsp;05&nbsp;&nbsp;&nbsp;&nbsp;17&nbsp;&nbsp;&nbsp;&nbsp;00</span>
<span class="t" style="left:733.25px;top:500.72px;font:17.5px 'Liberation Mono',monospace;letter-spacing:1.500px;color:#dedede;-webkit-text-stroke:0.12px;">.ˆ.j...u&amp;H‹.¸...</span>
</div>
<div class="r" style="left:1057.4px;top:207.6px;width:27.8px;height:600px;background:#f0f0f0;"></div>
<div class="r" style="left:1057.4px;top:210.5px;width:1.3px;height:600px;background:#fff;"></div>
<div class="r" style="left:1085.2px;top:207.6px;width:1px;height:600px;background:#b4b8c8;"></div>
<div class="r" style="left:1069.6px;top:296px;width:3.4px;height:43px;background:#8d8d8d;"></div>
<div class="r" style="left:1109.8px;top:208.9px;width:777.2px;height:600px;background:#fbfbfb;"></div>
<div class="c" style="left:1112px;top:211.8px;width:775px;height:517.2px;background:#1e1e1e;">
<div class="r" style="left:0px;top:0px;width:1100px;height:41.8px;background:#2d2d30;"></div>
<div class="r" style="left:0px;top:41.8px;width:144.2px;height:600px;background:#2d2d30;"></div>
<span class="t" style="left:20.05px;top:12.52px;font:17.5px 'Liberation Mono',monospace;letter-spacing:1.500px;color:#48c6aa;-webkit-text-stroke:0.12px;">Offset(h)</span>
<span class="t" style="left:144.75px;top:12.52px;font:17.5px 'Liberation Mono',monospace;letter-spacing:1.500px;color:#48c6aa;-webkit-text-stroke:0.12px;">00&nbsp;01&nbsp;02&nbsp;03&nbsp;04&nbsp;05&nbsp;06&nbsp;07&nbsp;08&nbsp;09&nbsp;0A&nbsp;0B&nbsp;0C&nbsp;0D&nbsp;0E&nbsp;0F</span>
<span class="t" style="left:732.45px;top:12.52px;font:17.5px 'Liberation Mono',monospace;letter-spacing:1.500px;color:#48c6aa;-webkit-text-stroke:0.12px;">Texte&nbsp;Décodé</span>
<span class="t" style="left:24.75px;top:44.72px;font:17.5px 'Liberation Mono',monospace;letter-spacing:1.500px;color:#48c6aa;-webkit-text-stroke:0.12px;">00000290</span>
<span class="t" style="left:144.75px;top:44.72px;font:17.5px 'Liberation Mono',monospace;letter-spacing:1.500px;color:#e2e2e2;-webkit-text-stroke:0.12px;">74&nbsp;&nbsp;&nbsp;&nbsp;78&nbsp;&nbsp;&nbsp;&nbsp;00&nbsp;&nbsp;&nbsp;&nbsp;00&nbsp;&nbsp;&nbsp;&nbsp;2A&nbsp;&nbsp;&nbsp;&nbsp;00&nbsp;&nbsp;&nbsp;&nbsp;A0&nbsp;&nbsp;&nbsp;&nbsp;00&nbsp;&nbsp;&nbsp;</span>
<span class="t" style="left:144.75px;top:44.72px;font:17.5px 'Liberation Mono',monospace;letter-spacing:1.500px;color:#dcae68;-webkit-text-stroke:0.12px;">&nbsp;&nbsp;&nbsp;65&nbsp;&nbsp;&nbsp;&nbsp;74&nbsp;&nbsp;&nbsp;&nbsp;00&nbsp;&nbsp;&nbsp;&nbsp;00&nbsp;&nbsp;&nbsp;&nbsp;00&nbsp;&nbsp;&nbsp;&nbsp;00&nbsp;&nbsp;&nbsp;&nbsp;1C&nbsp;&nbsp;&nbsp;&nbsp;00</span>
<span class="t" style="left:733.25px;top:44.72px;font:17.5px 'Liberation Mono',monospace;letter-spacing:1.500px;color:#dedede;-webkit-text-stroke:0.12px;">text....*...&nbsp;...</span>
<span class="t" style="left:24.75px;top:68.72px;font:17.5px 'Liberation Mono',monospace;letter-spacing:1.500px;color:#48c6aa;-webkit-text-stroke:0.12px;">000002A0</span>
<span class="t" style="left:144.75px;top:68.72px;font:17.5px 'Liberation Mono',monospace;letter-spacing:1.500px;color:#e2e2e2;-webkit-text-stroke:0.12px;">40&nbsp;&nbsp;&nbsp;&nbsp;00&nbsp;&nbsp;&nbsp;&nbsp;A0&nbsp;&nbsp;&nbsp;&nbsp;00&nbsp;&nbsp;&nbsp;&nbsp;00&nbsp;&nbsp;&nbsp;&nbsp;00&nbsp;&nbsp;&nbsp;&nbsp;00&nbsp;&nbsp;&nbsp;&nbsp;00&nbsp;&nbsp;&nbsp;</span>
<span class="t" style="left:144.75px;top:68.72px;font:17.5px 'Liberation Mono',monospace;letter-spacing:1.500px;color:#dcae68;-webkit-text-stroke:0.12px;">&nbsp;&nbsp;&nbsp;00&nbsp;&nbsp;&nbsp;&nbsp;00&nbsp;&nbsp;&nbsp;&nbsp;1C&nbsp;&nbsp;&nbsp;&nbsp;00&nbsp;&nbsp;&nbsp;&nbsp;00&nbsp;&nbsp;&nbsp;&nbsp;00&nbsp;&nbsp;&nbsp;&nbsp;00&nbsp;&nbsp;&nbsp;&nbsp;00</span>
<span class="t" style="left:733.25px;top:68.72px;font:17.5px 'Liberation Mono',monospace;letter-spacing:1.500px;color:#dedede;-webkit-text-stroke:0.12px;">@...&nbsp;...........</span>
<span class="t" style="left:24.75px;top:92.72px;font:17.5px 'Liberation Mono',monospace;letter-spacing:1.500px;color:#48c6aa;-webkit-text-stroke:0.12px;">000002B0</span>
<span class="t" style="left:144.75px;top:92.72px;font:17.5px 'Liberation Mono',monospace;letter-spacing:1.500px;color:#e2e2e2;-webkit-text-stroke:0.12px;">00&nbsp;&nbsp;&nbsp;&nbsp;00&nbsp;&nbsp;&nbsp;&nbsp;40&nbsp;&nbsp;&nbsp;&nbsp;00&nbsp;&nbsp;&nbsp;&nbsp;00&nbsp;&nbsp;&nbsp;&nbsp;00&nbsp;&nbsp;&nbsp;&nbsp;00&nbsp;&nbsp;&nbsp;&nbsp;00&nbsp;&nbsp;&nbsp;</span>
<span class="t" style="left:144.75px;top:92.72px;font:17.5px 'Liberation Mono',monospace;letter-spacing:1.500px;color:#dcae68;-webkit-text-stroke:0.12px;">&nbsp;&nbsp;&nbsp;00&nbsp;&nbsp;&nbsp;&nbsp;00&nbsp;&nbsp;&nbsp;&nbsp;00&nbsp;&nbsp;&nbsp;&nbsp;C0&nbsp;&nbsp;&nbsp;&nbsp;00&nbsp;&nbsp;&nbsp;&nbsp;00&nbsp;&nbsp;&nbsp;&nbsp;00&nbsp;&nbsp;&nbsp;&nbsp;00</span>
<span class="t" style="left:733.25px;top:92.72px;font:17.5px 'Liberation Mono',monospace;letter-spacing:1.500px;color:#dedede;-webkit-text-stroke:0.12px;">....@..À........</span>
<span class="t" style="left:24.75px;top:116.72px;font:17.5px 'Liberation Mono',monospace;letter-spacing:1.500px;color:#48c6aa;-webkit-text-stroke:0.12px;">000002C0</span>
<span class="t" style="left:144.75px;top:116.72px;font:17.5px 'Liberation Mono',monospace;letter-spacing:1.500px;color:#e2e2e2;-webkit-text-stroke:0.12px;">40&nbsp;&nbsp;&nbsp;&nbsp;48&nbsp;&nbsp;&nbsp;&nbsp;EC&nbsp;&nbsp;&nbsp;&nbsp;48&nbsp;&nbsp;&nbsp;&nbsp;05&nbsp;&nbsp;&nbsp;&nbsp;18&nbsp;&nbsp;&nbsp;&nbsp;00&nbsp;&nbsp;&nbsp;&nbsp;50&nbsp;&nbsp;&nbsp;</span>
<span class="t" style="left:144.75px;top:116.72px;font:17.5px 'Liberation Mono',monospace;letter-spacing:1.500px;color:#dcae68;-webkit-text-stroke:0.12px;">&nbsp;&nbsp;&nbsp;53&nbsp;&nbsp;&nbsp;&nbsp;83&nbsp;&nbsp;&nbsp;&nbsp;20&nbsp;&nbsp;&nbsp;&nbsp;8B&nbsp;&nbsp;&nbsp;&nbsp;93&nbsp;&nbsp;&nbsp;&nbsp;00&nbsp;&nbsp;&nbsp;&nbsp;FF&nbsp;&nbsp;&nbsp;&nbsp;18</span>
<span class="t" style="left:733.25px;top:116.72px;font:17.5px 'Liberation Mono',monospace;letter-spacing:1.500px;color:#dedede;-webkit-text-stroke:0.12px;">@SHƒì&nbsp;H‹.“...ÿP.</span>
<span class="t" style="left:24.75px;top:140.72px;font:17.5px 'Liberation Mono',monospace;letter-spacing:1.500px;color:#48c6aa;-webkit-text-stroke:0.12px;">000002D0</span>
<span class="t" style="left:144.75px;top:140.72px;font:17.5px 'Liberation Mono',monospace;letter-spacing:1.500px;color:#e2e2e2;-webkit-text-stroke:0.12px;">48&nbsp;&nbsp;&nbsp;&nbsp;0D&nbsp;&nbsp;&nbsp;&nbsp;18&nbsp;&nbsp;&nbsp;&nbsp;00&nbsp;&nbsp;&nbsp;&nbsp;8B&nbsp;&nbsp;&nbsp;&nbsp;40&nbsp;&nbsp;&nbsp;&nbsp;8B&nbsp;&nbsp;&nbsp;&nbsp;48&nbsp;&nbsp;&nbsp;</span>
<span class="t" style="left:144.75px;top:140.72px;font:17.5px 'Liberation Mono',monospace;letter-spacing:1.500px;color:#dcae68;-webkit-text-stroke:0.12px;">&nbsp;&nbsp;&nbsp;8B&nbsp;&nbsp;&nbsp;&nbsp;A9&nbsp;&nbsp;&nbsp;&nbsp;00&nbsp;&nbsp;&nbsp;&nbsp;48&nbsp;&nbsp;&nbsp;&nbsp;51&nbsp;&nbsp;&nbsp;&nbsp;48&nbsp;&nbsp;&nbsp;&nbsp;D8&nbsp;&nbsp;&nbsp;&nbsp;8B</span>
<span class="t" style="left:733.25px;top:140.72px;font:17.5px 'Liberation Mono',monospace;letter-spacing:1.500px;color:#dedede;-webkit-text-stroke:0.12px;">H‹.©...H‹Q@H‹ØH‹</span>
<span class="t" style="left:24.75px;top:164.72px;font:17.5px 'Liberation Mono',monospace;letter-spacing:1.500px;color:#48c6aa;-webkit-text-stroke:0.12px;">000002E0</span>
<span class="t" style="left:144.75px;top:164.72px;font:17.5px 'Liberation Mono',monospace;letter-spacing:1.500px;color:#e2e2e2;-webkit-text-stroke:0.12px;">CA&nbsp;&nbsp;&nbsp;&nbsp;52&nbsp;&nbsp;&nbsp;&nbsp;4C&nbsp;&nbsp;&nbsp;&nbsp;1D&nbsp;&nbsp;&nbsp;&nbsp;18&nbsp;&nbsp;&nbsp;&nbsp;00&nbsp;&nbsp;&nbsp;&nbsp;D2&nbsp;&nbsp;&nbsp;&nbsp;8B&nbsp;&nbsp;&nbsp;</span>
<span class="t" style="left:144.75px;top:164.72px;font:17.5px 'Liberation Mono',monospace;letter-spacing:1.500px;color:#dcae68;-webkit-text-stroke:0.12px;">&nbsp;&nbsp;&nbsp;FF&nbsp;&nbsp;&nbsp;&nbsp;30&nbsp;&nbsp;&nbsp;&nbsp;8B&nbsp;&nbsp;&nbsp;&nbsp;95&nbsp;&nbsp;&nbsp;&nbsp;00&nbsp;&nbsp;&nbsp;&nbsp;33&nbsp;&nbsp;&nbsp;&nbsp;4D&nbsp;&nbsp;&nbsp;&nbsp;43</span>
<span class="t" style="left:733.25px;top:164.72px;font:17.5px 'Liberation Mono',monospace;letter-spacing:1.500px;color:#dedede;-webkit-text-stroke:0.12px;">ÊÿR0L‹.•...3ÒM‹C</span>
<span class="t" style="left:24.75px;top:188.72px;font:17.5px 'Liberation Mono',monospace;letter-spacing:1.500px;color:#48c6aa;-webkit-text-stroke:0.12px;">000002F0</span>
<span class="t" style="left:144.75px;top:188.72px;font:17.5px 'Liberation Mono',monospace;letter-spacing:1.500px;color:#e2e2e2;-webkit-text-stroke:0.12px;">40&nbsp;&nbsp;&nbsp;&nbsp;8B&nbsp;&nbsp;&nbsp;&nbsp;41&nbsp;&nbsp;&nbsp;&nbsp;50&nbsp;&nbsp;&nbsp;&nbsp;48&nbsp;&nbsp;&nbsp;&nbsp;C3&nbsp;&nbsp;&nbsp;&nbsp;83&nbsp;&nbsp;&nbsp;&nbsp;20&nbsp;&nbsp;&nbsp;</span>
<span class="t" style="left:144.75px;top:188.72px;font:17.5px 'Liberation Mono',monospace;letter-spacing:1.500px;color:#dcae68;-webkit-text-stroke:0.12px;">&nbsp;&nbsp;&nbsp;49&nbsp;&nbsp;&nbsp;&nbsp;C8&nbsp;&nbsp;&nbsp;&nbsp;FF&nbsp;&nbsp;&nbsp;&nbsp;40&nbsp;&nbsp;&nbsp;&nbsp;8B&nbsp;&nbsp;&nbsp;&nbsp;48&nbsp;&nbsp;&nbsp;&nbsp;C4&nbsp;&nbsp;&nbsp;&nbsp;5B</span>
<span class="t" style="left:733.25px;top:188.72px;font:17.5px 'Liberation Mono',monospace;letter-spacing:1.500px;color:#dedede;-webkit-text-stroke:0.12px;">@I‹ÈAÿP@H‹ÃHƒÄ&nbsp;[</span>
<span class="t" style="left:24.75px;top:212.72px;font:17.5px 'Liberation Mono',monospace;letter-spacing:1.500px;color:#48c6aa;-webkit-text-stroke:0.12px;">00000300</span>
<span class="t" style="left:144.75px;top:212.72px;font:17.5px 'Liberation Mono',monospace;letter-spacing:1.500px;color:#e2e2e2;-webkit-text-stroke:0.12px;">C3&nbsp;&nbsp;&nbsp;&nbsp;CC&nbsp;&nbsp;&nbsp;&nbsp;48&nbsp;&nbsp;&nbsp;&nbsp;5C&nbsp;&nbsp;&nbsp;&nbsp;08&nbsp;&nbsp;&nbsp;&nbsp;48&nbsp;&nbsp;&nbsp;&nbsp;EC&nbsp;&nbsp;&nbsp;&nbsp;32&nbsp;&nbsp;&nbsp;</span>
<span class="t" style="left:144.75px;top:212.72px;font:17.5px 'Liberation Mono',monospace;letter-spacing:1.500px;color:#dcae68;-webkit-text-stroke:0.12px;">&nbsp;&nbsp;&nbsp;CC&nbsp;&nbsp;&nbsp;&nbsp;CC&nbsp;&nbsp;&nbsp;&nbsp;89&nbsp;&nbsp;&nbsp;&nbsp;24&nbsp;&nbsp;&nbsp;&nbsp;57&nbsp;&nbsp;&nbsp;&nbsp;83&nbsp;&nbsp;&nbsp;&nbsp;20&nbsp;&nbsp;&nbsp;&nbsp;DB</span>
<span class="t" style="left:733.25px;top:212.72px;font:17.5px 'Liberation Mono',monospace;letter-spacing:1.500px;color:#dedede;-webkit-text-stroke:0.12px;">ÃÌÌÌH‰\$.WHƒì&nbsp;2Û</span>
<span class="t" style="left:24.75px;top:236.72px;font:17.5px 'Liberation Mono',monospace;letter-spacing:1.500px;color:#48c6aa;-webkit-text-stroke:0.12px;">00000310</span>
<span class="t" style="left:144.75px;top:236.72px;font:17.5px 'Liberation Mono',monospace;letter-spacing:1.500px;color:#e2e2e2;-webkit-text-stroke:0.12px;">40&nbsp;&nbsp;&nbsp;&nbsp;FF&nbsp;&nbsp;&nbsp;&nbsp;1D&nbsp;&nbsp;&nbsp;&nbsp;18&nbsp;&nbsp;&nbsp;&nbsp;00&nbsp;&nbsp;&nbsp;&nbsp;20&nbsp;&nbsp;&nbsp;&nbsp;3D&nbsp;&nbsp;&nbsp;&nbsp;18&nbsp;&nbsp;&nbsp;</span>
<span class="t" style="left:144.75px;top:236.72px;font:17.5px 'Liberation Mono',monospace;letter-spacing:1.500px;color:#dcae68;-webkit-text-stroke:0.12px;">&nbsp;&nbsp;&nbsp;32&nbsp;&nbsp;&nbsp;&nbsp;38&nbsp;&nbsp;&nbsp;&nbsp;18&nbsp;&nbsp;&nbsp;&nbsp;00&nbsp;&nbsp;&nbsp;&nbsp;74&nbsp;&nbsp;&nbsp;&nbsp;83&nbsp;&nbsp;&nbsp;&nbsp;56&nbsp;&nbsp;&nbsp;&nbsp;00</span>
<span class="t" style="left:733.25px;top:236.72px;font:17.5px 'Liberation Mono',monospace;letter-spacing:1.500px;color:#dedede;-webkit-text-stroke:0.12px;">@2ÿ8.....t&nbsp;ƒ=V..</span>
<span class="t" style="left:24.75px;top:260.72px;font:17.5px 'Liberation Mono',monospace;letter-spacing:1.500px;color:#48c6aa;-webkit-text-stroke:0.12px;">00000320</span>
<span class="t" style="left:144.75px;top:260.72px;font:17.5px 'Liberation Mono',monospace;letter-spacing:1.500px;color:#e2e2e2;-webkit-text-stroke:0.12px;">00&nbsp;&nbsp;&nbsp;&nbsp;75&nbsp;&nbsp;&nbsp;&nbsp;E8&nbsp;&nbsp;&nbsp;&nbsp;FF&nbsp;&nbsp;&nbsp;&nbsp;FF&nbsp;&nbsp;&nbsp;&nbsp;8D&nbsp;&nbsp;&nbsp;&nbsp;50&nbsp;&nbsp;&nbsp;&nbsp;00&nbsp;&nbsp;&nbsp;</span>
<span class="t" style="left:144.75px;top:260.72px;font:17.5px 'Liberation Mono',monospace;letter-spacing:1.500px;color:#dcae68;-webkit-text-stroke:0.12px;">&nbsp;&nbsp;&nbsp;02&nbsp;&nbsp;&nbsp;&nbsp;17&nbsp;&nbsp;&nbsp;&nbsp;97&nbsp;&nbsp;&nbsp;&nbsp;FF&nbsp;&nbsp;&nbsp;&nbsp;48&nbsp;&nbsp;&nbsp;&nbsp;0D&nbsp;&nbsp;&nbsp;&nbsp;12&nbsp;&nbsp;&nbsp;&nbsp;00</span>
<span class="t" style="left:733.25px;top:260.72px;font:17.5px 'Liberation Mono',monospace;letter-spacing:1.500px;color:#dedede;-webkit-text-stroke:0.12px;">..u.è—ÿÿÿH..P...</span>
<span class="t" style="left:24.75px;top:284.72px;font:17.5px 'Liberation Mono',monospace;letter-spacing:1.500px;color:#48c6aa;-webkit-text-stroke:0.12px;">00000330</span>
<span class="t" style="left:144.75px;top:284.72px;font:17.5px 'Liberation Mono',monospace;letter-spacing:1.500px;color:#e2e2e2;-webkit-text-stroke:0.12px;">40&nbsp;&nbsp;&nbsp;&nbsp;01&nbsp;&nbsp;&nbsp;&nbsp;50&nbsp;&nbsp;&nbsp;&nbsp;00&nbsp;&nbsp;&nbsp;&nbsp;40&nbsp;&nbsp;&nbsp;&nbsp;DF&nbsp;&nbsp;&nbsp;&nbsp;3D&nbsp;&nbsp;&nbsp;&nbsp;17&nbsp;&nbsp;&nbsp;</span>
<span class="t" style="left:144.75px;top:284.72px;font:17.5px 'Liberation Mono',monospace;letter-spacing:1.500px;color:#dcae68;-webkit-text-stroke:0.12px;">&nbsp;&nbsp;&nbsp;B7&nbsp;&nbsp;&nbsp;&nbsp;E8&nbsp;&nbsp;&nbsp;&nbsp;06&nbsp;&nbsp;&nbsp;&nbsp;00&nbsp;&nbsp;&nbsp;&nbsp;8A&nbsp;&nbsp;&nbsp;&nbsp;80&nbsp;&nbsp;&nbsp;&nbsp;EE&nbsp;&nbsp;&nbsp;&nbsp;00</span>
<span class="t" style="left:733.25px;top:284.72px;font:17.5px 'Liberation Mono',monospace;letter-spacing:1.500px;color:#dedede;-webkit-text-stroke:0.12px;">@·.èP...@Šß€=î..</span>
<span class="t" style="left:24.75px;top:308.72px;font:17.5px 'Liberation Mono',monospace;letter-spacing:1.500px;color:#48c6aa;-webkit-text-stroke:0.12px;">00000340</span>
<span class="t" style="left:144.75px;top:308.72px;font:17.5px 'Liberation Mono',monospace;letter-spacing:1.500px;color:#e2e2e2;-webkit-text-stroke:0.12px;">00&nbsp;&nbsp;&nbsp;&nbsp;74&nbsp;&nbsp;&nbsp;&nbsp;48&nbsp;&nbsp;&nbsp;&nbsp;3D&nbsp;&nbsp;&nbsp;&nbsp;17&nbsp;&nbsp;&nbsp;&nbsp;00&nbsp;&nbsp;&nbsp;&nbsp;74&nbsp;&nbsp;&nbsp;&nbsp;E8&nbsp;&nbsp;&nbsp;</span>
<span class="t" style="left:144.75px;top:308.72px;font:17.5px 'Liberation Mono',monospace;letter-spacing:1.500px;color:#dcae68;-webkit-text-stroke:0.12px;">&nbsp;&nbsp;&nbsp;00&nbsp;&nbsp;&nbsp;&nbsp;36&nbsp;&nbsp;&nbsp;&nbsp;83&nbsp;&nbsp;&nbsp;&nbsp;EC&nbsp;&nbsp;&nbsp;&nbsp;00&nbsp;&nbsp;&nbsp;&nbsp;00&nbsp;&nbsp;&nbsp;&nbsp;2C&nbsp;&nbsp;&nbsp;&nbsp;41</span>
<span class="t" style="left:733.25px;top:308.72px;font:17.5px 'Liberation Mono',monospace;letter-spacing:1.500px;color:#dedede;-webkit-text-stroke:0.12px;">..t6Hƒ=ì....t,èA</span>
<span class="t" style="left:24.75px;top:332.72px;font:17.5px 'Liberation Mono',monospace;letter-spacing:1.500px;color:#48c6aa;-webkit-text-stroke:0.12px;">00000350</span>
<span class="t" style="left:144.75px;top:332.72px;font:17.5px 'Liberation Mono',monospace;letter-spacing:1.500px;color:#e2e2e2;-webkit-text-stroke:0.12px;">01&nbsp;&nbsp;&nbsp;&nbsp;00&nbsp;&nbsp;&nbsp;&nbsp;B9&nbsp;&nbsp;&nbsp;&nbsp;00&nbsp;&nbsp;&nbsp;&nbsp;00&nbsp;&nbsp;&nbsp;&nbsp;00&nbsp;&nbsp;&nbsp;&nbsp;80&nbsp;&nbsp;&nbsp;&nbsp;3B&nbsp;&nbsp;&nbsp;</span>
<span class="t" style="left:144.75px;top:332.72px;font:17.5px 'Liberation Mono',monospace;letter-spacing:1.500px;color:#dcae68;-webkit-text-stroke:0.12px;">&nbsp;&nbsp;&nbsp;00&nbsp;&nbsp;&nbsp;&nbsp;48&nbsp;&nbsp;&nbsp;&nbsp;03&nbsp;&nbsp;&nbsp;&nbsp;00&nbsp;&nbsp;&nbsp;&nbsp;00&nbsp;&nbsp;&nbsp;&nbsp;00&nbsp;&nbsp;&nbsp;&nbsp;48&nbsp;&nbsp;&nbsp;&nbsp;C1</span>
<span class="t" style="left:733.25px;top:332.72px;font:17.5px 'Liberation Mono',monospace;letter-spacing:1.500px;color:#dedede;-webkit-text-stroke:0.12px;">...H¹.......€H;Á</span>
<span class="t" style="left:24.75px;top:356.72px;font:17.5px 'Liberation Mono',monospace;letter-spacing:1.500px;color:#48c6aa;-webkit-text-stroke:0.12px;">00000360</span>
<span class="t" style="left:144.75px;top:356.72px;font:17.5px 'Liberation Mono',monospace;letter-spacing:1.500px;color:#e2e2e2;-webkit-text-stroke:0.12px;">75&nbsp;&nbsp;&nbsp;&nbsp;40&nbsp;&nbsp;&nbsp;&nbsp;FF&nbsp;&nbsp;&nbsp;&nbsp;05&nbsp;&nbsp;&nbsp;&nbsp;54&nbsp;&nbsp;&nbsp;&nbsp;FF&nbsp;&nbsp;&nbsp;&nbsp;48&nbsp;&nbsp;&nbsp;&nbsp;0D&nbsp;&nbsp;&nbsp;</span>
<span class="t" style="left:144.75px;top:356.72px;font:17.5px 'Liberation Mono',monospace;letter-spacing:1.500px;color:#dcae68;-webkit-text-stroke:0.12px;">&nbsp;&nbsp;&nbsp;18&nbsp;&nbsp;&nbsp;&nbsp;84&nbsp;&nbsp;&nbsp;&nbsp;75&nbsp;&nbsp;&nbsp;&nbsp;E8&nbsp;&nbsp;&nbsp;&nbsp;FF&nbsp;&nbsp;&nbsp;&nbsp;FF&nbsp;&nbsp;&nbsp;&nbsp;8D&nbsp;&nbsp;&nbsp;&nbsp;6D</span>
<span class="t" style="left:733.25px;top:356.72px;font:17.5px 'Liberation Mono',monospace;letter-spacing:1.500px;color:#dedede;-webkit-text-stroke:0.12px;">u.@„ÿu.èTÿÿÿH..m</span>
<span class="t" style="left:24.75px;top:380.72px;font:17.5px 'Liberation Mono',monospace;letter-spacing:1.500px;color:#48c6aa;-webkit-text-stroke:0.12px;">00000370</span>
<span class="t" style="left:144.75px;top:380.72px;font:17.5px 'Liberation Mono',monospace;letter-spacing:1.500px;color:#e2e2e2;-webkit-text-stroke:0.12px;">11&nbsp;&nbsp;&nbsp;&nbsp;00&nbsp;&nbsp;&nbsp;&nbsp;10&nbsp;&nbsp;&nbsp;&nbsp;00&nbsp;&nbsp;&nbsp;&nbsp;B3&nbsp;&nbsp;&nbsp;&nbsp;84&nbsp;&nbsp;&nbsp;&nbsp;74&nbsp;&nbsp;&nbsp;&nbsp;C7&nbsp;&nbsp;&nbsp;</span>
<span class="t" style="left:144.75px;top:380.72px;font:17.5px 'Liberation Mono',monospace;letter-spacing:1.500px;color:#dcae68;-webkit-text-stroke:0.12px;">&nbsp;&nbsp;&nbsp;00&nbsp;&nbsp;&nbsp;&nbsp;E8&nbsp;&nbsp;&nbsp;&nbsp;06&nbsp;&nbsp;&nbsp;&nbsp;00&nbsp;&nbsp;&nbsp;&nbsp;01&nbsp;&nbsp;&nbsp;&nbsp;DB&nbsp;&nbsp;&nbsp;&nbsp;10&nbsp;&nbsp;&nbsp;&nbsp;44</span>
<span class="t" style="left:733.25px;top:380.72px;font:17.5px 'Liberation Mono',monospace;letter-spacing:1.500px;color:#dedede;-webkit-text-stroke:0.12px;">...è....³.„Ût.ÇD</span>
<div class="r" style="left:612px;top:401.8px;width:24px;height:24px;background:#0078d7;"></div>
<span class="t" style="left:24.75px;top:404.72px;font:17.5px 'Liberation Mono',monospace;letter-spacing:1.500px;color:#48c6aa;-webkit-text-stroke:0.12px;">00000380</span>
<span class="t" style="left:144.75px;top:404.72px;font:17.5px 'Liberation Mono',monospace;letter-spacing:1.500px;color:#e2e2e2;-webkit-text-stroke:0.12px;">24&nbsp;&nbsp;&nbsp;&nbsp;01&nbsp;&nbsp;&nbsp;&nbsp;00&nbsp;&nbsp;&nbsp;&nbsp;8B&nbsp;&nbsp;&nbsp;&nbsp;24&nbsp;&nbsp;&nbsp;&nbsp;85&nbsp;&nbsp;&nbsp;&nbsp;75&nbsp;&nbsp;&nbsp;&nbsp;48&nbsp;&nbsp;&nbsp;</span>
<span class="t" style="left:144.75px;top:404.72px;font:17.5px 'Liberation Mono',monospace;letter-spacing:1.500px;color:#dcae68;-webkit-text-stroke:0.12px;">&nbsp;&nbsp;&nbsp;40&nbsp;&nbsp;&nbsp;&nbsp;00&nbsp;&nbsp;&nbsp;&nbsp;00&nbsp;&nbsp;&nbsp;&nbsp;44&nbsp;&nbsp;&nbsp;&nbsp;40&nbsp;&nbsp;&nbsp;&nbsp;C0&nbsp;&nbsp;&nbsp;&nbsp;&nbsp;&nbsp;&nbsp;&nbsp;&nbsp;&nbsp;8B</span>
<span class="t" style="left:144.75px;top:404.72px;font:17.5px 'Liberation Mono',monospace;letter-spacing:1.500px;color:#fff;-webkit-text-stroke:0.12px;">&nbsp;&nbsp;&nbsp;&nbsp;&nbsp;&nbsp;&nbsp;&nbsp;&nbsp;&nbsp;&nbsp;&nbsp;&nbsp;&nbsp;&nbsp;&nbsp;&nbsp;&nbsp;&nbsp;&nbsp;&nbsp;&nbsp;&nbsp;&nbsp;&nbsp;&nbsp;&nbsp;&nbsp;&nbsp;&nbsp;&nbsp;&nbsp;&nbsp;&nbsp;&nbsp;&nbsp;&nbsp;&nbsp;&nbsp;00&nbsp;&nbsp;&nbsp;&nbsp;&nbsp;&nbsp;</span>
<span class="t" style="left:733.25px;top:404.72px;font:17.5px 'Liberation Mono',monospace;letter-spacing:1.500px;color:#dedede;-webkit-text-stroke:0.12px;">$@....‹D$@…Àu.H‹</span>
<span class="t" style="left:24.75px;top:428.72px;font:17.5px 'Liberation Mono',monospace;letter-spacing:1.500px;color:#48c6aa;-webkit-text-stroke:0.12px;">00000390</span>
<span class="t" style="left:144.75px;top:428.72px;font:17.5px 'Liberation Mono',monospace;letter-spacing:1.500px;color:#e2e2e2;-webkit-text-stroke:0.12px;">5C&nbsp;&nbsp;&nbsp;&nbsp;30&nbsp;&nbsp;&nbsp;&nbsp;83&nbsp;&nbsp;&nbsp;&nbsp;20&nbsp;&nbsp;&nbsp;&nbsp;C3&nbsp;&nbsp;&nbsp;&nbsp;CC&nbsp;&nbsp;&nbsp;&nbsp;48&nbsp;&nbsp;&nbsp;&nbsp;EC&nbsp;&nbsp;&nbsp;</span>
<span class="t" style="left:144.75px;top:428.72px;font:17.5px 'Liberation Mono',monospace;letter-spacing:1.500px;color:#dcae68;-webkit-text-stroke:0.12px;">&nbsp;&nbsp;&nbsp;24&nbsp;&nbsp;&nbsp;&nbsp;48&nbsp;&nbsp;&nbsp;&nbsp;C4&nbsp;&nbsp;&nbsp;&nbsp;5F&nbsp;&nbsp;&nbsp;&nbsp;CC&nbsp;&nbsp;&nbsp;&nbsp;CC&nbsp;&nbsp;&nbsp;&nbsp;83&nbsp;&nbsp;&nbsp;&nbsp;28</span>
<span class="t" style="left:733.25px;top:428.72px;font:17.5px 'Liberation Mono',monospace;letter-spacing:1.500px;color:#dedede;-webkit-text-stroke:0.12px;">\$0HƒÄ&nbsp;_ÃÌÌÌHƒì(</span>
<span class="t" style="left:24.75px;top:452.72px;font:17.5px 'Liberation Mono',monospace;letter-spacing:1.500px;color:#48c6aa;-webkit-text-stroke:0.12px;">000003A0</span>
<span class="t" style="left:144.75px;top:452.72px;font:17.5px 'Liberation Mono',monospace;letter-spacing:1.500px;color:#e2e2e2;-webkit-text-stroke:0.12px;">E8&nbsp;&nbsp;&nbsp;&nbsp;06&nbsp;&nbsp;&nbsp;&nbsp;00&nbsp;&nbsp;&nbsp;&nbsp;83&nbsp;&nbsp;&nbsp;&nbsp;B3&nbsp;&nbsp;&nbsp;&nbsp;00&nbsp;&nbsp;&nbsp;&nbsp;00&nbsp;&nbsp;&nbsp;&nbsp;8A&nbsp;&nbsp;&nbsp;</span>
<span class="t" style="left:144.75px;top:452.72px;font:17.5px 'Liberation Mono',monospace;letter-spacing:1.500px;color:#dcae68;-webkit-text-stroke:0.12px;">&nbsp;&nbsp;&nbsp;8B&nbsp;&nbsp;&nbsp;&nbsp;00&nbsp;&nbsp;&nbsp;&nbsp;48&nbsp;&nbsp;&nbsp;&nbsp;3D&nbsp;&nbsp;&nbsp;&nbsp;17&nbsp;&nbsp;&nbsp;&nbsp;00&nbsp;&nbsp;&nbsp;&nbsp;44&nbsp;&nbsp;&nbsp;&nbsp;1D</span>
<span class="t" style="left:733.25px;top:452.72px;font:17.5px 'Liberation Mono',monospace;letter-spacing:1.500px;color:#dedede;-webkit-text-stroke:0.12px;">è‹...Hƒ=³....DŠ.</span>
<span class="t" style="left:24.75px;top:476.72px;font:17.5px 'Liberation Mono',monospace;letter-spacing:1.500px;color:#48c6aa;-webkit-text-stroke:0.12px;">000003B0</span>
<span class="t" style="left:144.75px;top:476.72px;font:17.5px 'Liberation Mono',monospace;letter-spacing:1.500px;color:#e2e2e2;-webkit-text-stroke:0.12px;">49&nbsp;&nbsp;&nbsp;&nbsp;00&nbsp;&nbsp;&nbsp;&nbsp;8A&nbsp;&nbsp;&nbsp;&nbsp;62&nbsp;&nbsp;&nbsp;&nbsp;00&nbsp;&nbsp;&nbsp;&nbsp;44&nbsp;&nbsp;&nbsp;&nbsp;1D&nbsp;&nbsp;&nbsp;&nbsp;17&nbsp;&nbsp;&nbsp;</span>
<span class="t" style="left:144.75px;top:476.72px;font:17.5px 'Liberation Mono',monospace;letter-spacing:1.500px;color:#dcae68;-webkit-text-stroke:0.12px;">&nbsp;&nbsp;&nbsp;16&nbsp;&nbsp;&nbsp;&nbsp;00&nbsp;&nbsp;&nbsp;&nbsp;05&nbsp;&nbsp;&nbsp;&nbsp;16&nbsp;&nbsp;&nbsp;&nbsp;00&nbsp;&nbsp;&nbsp;&nbsp;88&nbsp;&nbsp;&nbsp;&nbsp;6F&nbsp;&nbsp;&nbsp;&nbsp;00</span>
<span class="t" style="left:733.25px;top:476.72px;font:17.5px 'Liberation Mono',monospace;letter-spacing:1.500px;color:#dedede;-webkit-text-stroke:0.12px;">I...Š.b...Dˆ.o..</span>
<span class="t" style="left:24.75px;top:500.72px;font:17.5px 'Liberation Mono',monospace;letter-spacing:1.500px;color:#48c6aa;-webkit-text-stroke:0.12px;">000003C0</span>
<span class="t" style="left:144.75px;top:500.72px;font:17.5px 'Liberation Mono',monospace;letter-spacing:1.500px;color:#e2e2e2;-webkit-text-stroke:0.12px;">00&nbsp;&nbsp;&nbsp;&nbsp;05&nbsp;&nbsp;&nbsp;&nbsp;17&nbsp;&nbsp;&nbsp;&nbsp;00&nbsp;&nbsp;&nbsp;&nbsp;26&nbsp;&nbsp;&nbsp;&nbsp;8B&nbsp;&nbsp;&nbsp;&nbsp;B8&nbsp;&nbsp;&nbsp;&nbsp;00&nbsp;&nbsp;&nbsp;</span>
<span class="t" style="left:144.75px;top:500.72px;font:17.5px 'Liberation Mono',monospace;letter-spacing:1.500px;color:#dcae68;-webkit-text-stroke:0.12px;">&nbsp;&nbsp;&nbsp;88&nbsp;&nbsp;&nbsp;&nbsp;6A&nbsp;&nbsp;&nbsp;&nbsp;00&nbsp;&nbsp;&nbsp;&nbsp;75&nbsp;&nbsp;&nbsp;&nbsp;48&nbsp;&nbsp;&nbsp;&nbsp;05&nbsp;&nbsp;&nbsp;&nbsp;17&nbsp;&nbsp;&nbsp;&nbsp;00</span>
<span class="t" style="left:733.25px;top:500.72px;font:17.5px 'Liberation Mono',monospace;letter-spacing:1.500px;color:#dedede;-webkit-text-stroke:0.12px;">.ˆ.j...u&amp;H‹.¸...</span>
</div>
<div class="r" style="left:1887px;top:167.5px;width:29px;height:600px;background:#f0f0f0;"></div>
<div class="r" style="left:1899px;top:203px;width:3.6px;height:600px;background:#8d8d8d;"></div>
</div>
</div>
</body></html>
